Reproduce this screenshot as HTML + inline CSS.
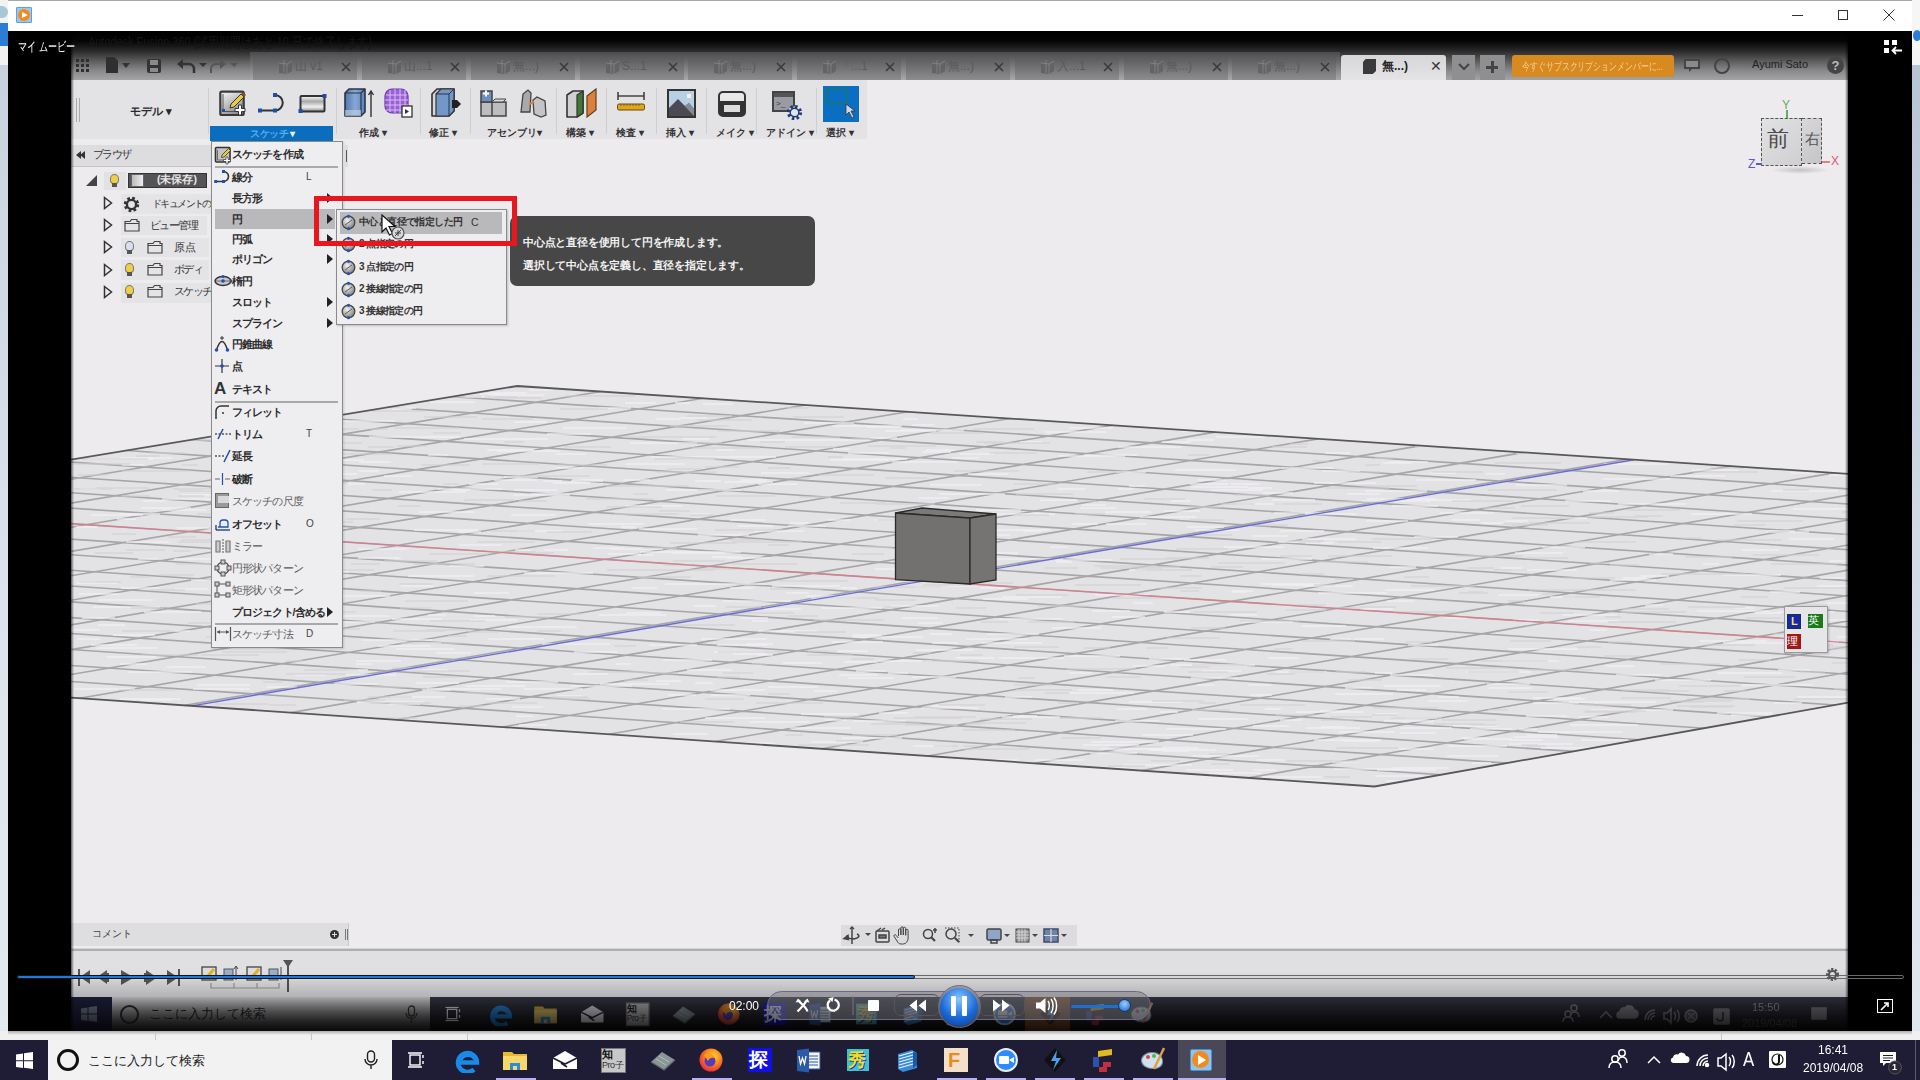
<!DOCTYPE html>
<html><head><meta charset="utf-8">
<style>
*{margin:0;padding:0;box-sizing:border-box}
html,body{width:1920px;height:1080px;overflow:hidden;background:#f0f0f0;font-family:"Liberation Sans",sans-serif}
.a{position:absolute}
</style></head>
<body>
<div class="a" style="left:0;top:0;width:8px;height:1040px;background:linear-gradient(#c8d3df 65px,#dbe3ec 600px,#e4e9ef)"></div>
<div class="a" style="left:0;top:0;width:8px;height:65px;background:#f2f2f2"></div>
<div class="a" style="left:0;top:23px;width:8px;height:23px;background:#2a7fd4"></div>
<div class="a" style="left:0;top:6px;width:8px;height:12px;background:#a8c8d8;border-radius:0 6px 6px 0"></div>
<div class="a" style="left:1912px;top:0;width:8px;height:1040px;background:linear-gradient(#b8c5d3 65px,#d8e0ea 700px,#e0e6ee)"></div>
<div class="a" style="left:1912px;top:0;width:8px;height:65px;background:#f6f6f6"></div>
<div class="a" style="left:1913px;top:30px;width:8px;height:11px;background:#2a7fd4;border-radius:50%"></div>
<div class="a" style="left:0;top:1031px;width:1920px;height:9px;background:#f0f0f0"></div>
<!-- player window title bar -->
<div class="a" style="left:8px;top:0;width:1904px;height:31px;background:#fff;border-top:1px solid #a8a8a8"></div>
<div class="a" style="left:16px;top:7px;width:16px;height:16px;background:#9cc8ee;border:1px solid #5aa0e0;border-radius:1px"></div>
<div class="a" style="left:18px;top:9px;width:12px;height:12px;background:#f5891e;border-radius:50%"></div>
<div class="a" style="left:22px;top:12px;width:0;height:0;border-left:6px solid #fff;border-top:3.5px solid transparent;border-bottom:3.5px solid transparent"></div>
<div class="a" style="left:1792px;top:15px;width:11px;height:1px;background:#333"></div>
<div class="a" style="left:1838px;top:10px;width:10px;height:10px;border:1px solid #333"></div>
<svg class="a" style="left:1883px;top:9px" width="12" height="12"><path d="M0.5 0.5L11.5 11.5M11.5 0.5L0.5 11.5" stroke="#333" stroke-width="1"/></svg>
<!-- video black -->
<div class="a" style="left:8px;top:31px;width:1904px;height:1000px;background:#000"></div>

<!-- FUSION -->
<div class="a" style="left:71px;top:31px;width:1777px;height:966px;background:#edebee"></div>
<!-- fusion title + tab bar gradient -->
<div class="a" style="left:71px;top:31px;width:1777px;height:49px;background:linear-gradient(#000 0px,#050505 10px,#2a2a2a 20px,#5c5c5c 30px,#8a8a8c 40px,#a4a3a6 49px)"></div>
<div class="a" style="left:88px;top:34px;font-size:14px;color:#161616;white-space:nowrap;transform:scaleX(0.78);transform-origin:0 0;line-height:16px">Autodesk Fusion 360 (試用期間はあと 10 日で終了します)</div>
<!-- left quick access icons -->
<div class="a" style="left:76px;top:59px;width:13px;height:13px;background:repeating-linear-gradient(90deg,#2f2f2f 0 3px,transparent 3px 5px),transparent;-webkit-mask:repeating-linear-gradient(#000 0 3px,transparent 3px 5px)"></div>
<div class="a" style="left:106px;top:57px;width:12px;height:16px;background:#2f2f2f;clip-path:polygon(0 0,70% 0,100% 25%,100% 100%,0 100%)"></div>
<div class="a" style="left:122px;top:63px;width:0;height:0;border-top:5px solid #333;border-left:4px solid transparent;border-right:4px solid transparent"></div>
<div class="a" style="left:147px;top:59px;width:14px;height:14px;background:#333;border-radius:2px"></div>
<div class="a" style="left:150px;top:60px;width:8px;height:5px;background:#8a8a8a"></div>
<div class="a" style="left:150px;top:68px;width:8px;height:4px;background:#8a8a8a"></div>
<svg class="a" style="left:176px;top:57px" width="64" height="18"><path d="M4 7h9a5 5 0 0 1 5 5v4" stroke="#333" stroke-width="2.5" fill="none"/><path d="M1 7l6-5v10z" fill="#333"/><path d="M23 6l4 4 4-4z" fill="#333"/><path d="M45 7h-5a5 5 0 0 0-5 5v4" stroke="#555" stroke-width="2" fill="none"/><path d="M50 7l-6-5v10z" fill="#555"/><path d="M54 6l4 4 4-4z" fill="#555"/></svg>
<!-- tabs -->
<div class="a" style="left:250px;top:52px;width:1090px;height:28px;background:linear-gradient(#4a4a4c,#a9a8ab)"></div><div class="a" style="left:253px;top:55px;width:104px;height:25px;background:linear-gradient(#555557,#8d8c8f);"></div><svg class="a" style="left:277px;top:59px" width="16" height="16"><path d="M2 4l5-3 8 1v10l-5 3-8-1z" fill="#636265"/><path d="M7 1v13M2 4l8 1v10M10 5l5-3" stroke="#88878a" stroke-width="0.8" fill="none"/></svg><div class="a" style="left:295px;top:59px;font-size:12px;color:#5a595c;white-space:nowrap;line-height:15px">山 v1</div><svg class="a" style="left:341px;top:62px" width="10" height="10"><path d="M1 1l8 8M9 1l-8 8" stroke="#3a3a3a" stroke-width="1.6"/></svg><div class="a" style="left:362px;top:55px;width:104px;height:25px;background:linear-gradient(#555557,#8d8c8f);"></div><svg class="a" style="left:386px;top:59px" width="16" height="16"><path d="M2 4l5-3 8 1v10l-5 3-8-1z" fill="#636265"/><path d="M7 1v13M2 4l8 1v10M10 5l5-3" stroke="#88878a" stroke-width="0.8" fill="none"/></svg><div class="a" style="left:404px;top:59px;font-size:12px;color:#5a595c;white-space:nowrap;line-height:15px">山...1</div><svg class="a" style="left:450px;top:62px" width="10" height="10"><path d="M1 1l8 8M9 1l-8 8" stroke="#3a3a3a" stroke-width="1.6"/></svg><div class="a" style="left:471px;top:55px;width:104px;height:25px;background:linear-gradient(#555557,#8d8c8f);"></div><svg class="a" style="left:495px;top:59px" width="16" height="16"><path d="M2 4l5-3 8 1v10l-5 3-8-1z" fill="#636265"/><path d="M7 1v13M2 4l8 1v10M10 5l5-3" stroke="#88878a" stroke-width="0.8" fill="none"/></svg><div class="a" style="left:513px;top:59px;font-size:12px;color:#5a595c;white-space:nowrap;line-height:15px">無...)</div><svg class="a" style="left:559px;top:62px" width="10" height="10"><path d="M1 1l8 8M9 1l-8 8" stroke="#3a3a3a" stroke-width="1.6"/></svg><div class="a" style="left:580px;top:55px;width:104px;height:25px;background:linear-gradient(#555557,#8d8c8f);"></div><svg class="a" style="left:604px;top:59px" width="16" height="16"><path d="M2 4l5-3 8 1v10l-5 3-8-1z" fill="#636265"/><path d="M7 1v13M2 4l8 1v10M10 5l5-3" stroke="#88878a" stroke-width="0.8" fill="none"/></svg><div class="a" style="left:622px;top:59px;font-size:12px;color:#5a595c;white-space:nowrap;line-height:15px">S...1</div><svg class="a" style="left:668px;top:62px" width="10" height="10"><path d="M1 1l8 8M9 1l-8 8" stroke="#3a3a3a" stroke-width="1.6"/></svg><div class="a" style="left:688px;top:55px;width:104px;height:25px;background:linear-gradient(#555557,#8d8c8f);"></div><svg class="a" style="left:712px;top:59px" width="16" height="16"><path d="M2 4l5-3 8 1v10l-5 3-8-1z" fill="#636265"/><path d="M7 1v13M2 4l8 1v10M10 5l5-3" stroke="#88878a" stroke-width="0.8" fill="none"/></svg><div class="a" style="left:730px;top:59px;font-size:12px;color:#5a595c;white-space:nowrap;line-height:15px">無...)</div><svg class="a" style="left:776px;top:62px" width="10" height="10"><path d="M1 1l8 8M9 1l-8 8" stroke="#3a3a3a" stroke-width="1.6"/></svg><div class="a" style="left:797px;top:55px;width:104px;height:25px;background:linear-gradient(#555557,#8d8c8f);"></div><svg class="a" style="left:821px;top:59px" width="16" height="16"><path d="M2 4l5-3 8 1v10l-5 3-8-1z" fill="#636265"/><path d="M7 1v13M2 4l8 1v10M10 5l5-3" stroke="#88878a" stroke-width="0.8" fill="none"/></svg><div class="a" style="left:839px;top:59px;font-size:12px;color:#5a595c;white-space:nowrap;line-height:15px">「...1</div><svg class="a" style="left:885px;top:62px" width="10" height="10"><path d="M1 1l8 8M9 1l-8 8" stroke="#3a3a3a" stroke-width="1.6"/></svg><div class="a" style="left:906px;top:55px;width:104px;height:25px;background:linear-gradient(#555557,#8d8c8f);"></div><svg class="a" style="left:930px;top:59px" width="16" height="16"><path d="M2 4l5-3 8 1v10l-5 3-8-1z" fill="#636265"/><path d="M7 1v13M2 4l8 1v10M10 5l5-3" stroke="#88878a" stroke-width="0.8" fill="none"/></svg><div class="a" style="left:948px;top:59px;font-size:12px;color:#5a595c;white-space:nowrap;line-height:15px">無...)</div><svg class="a" style="left:994px;top:62px" width="10" height="10"><path d="M1 1l8 8M9 1l-8 8" stroke="#3a3a3a" stroke-width="1.6"/></svg><div class="a" style="left:1015px;top:55px;width:104px;height:25px;background:linear-gradient(#555557,#8d8c8f);"></div><svg class="a" style="left:1039px;top:59px" width="16" height="16"><path d="M2 4l5-3 8 1v10l-5 3-8-1z" fill="#636265"/><path d="M7 1v13M2 4l8 1v10M10 5l5-3" stroke="#88878a" stroke-width="0.8" fill="none"/></svg><div class="a" style="left:1057px;top:59px;font-size:12px;color:#5a595c;white-space:nowrap;line-height:15px">入...1</div><svg class="a" style="left:1103px;top:62px" width="10" height="10"><path d="M1 1l8 8M9 1l-8 8" stroke="#3a3a3a" stroke-width="1.6"/></svg><div class="a" style="left:1124px;top:55px;width:104px;height:25px;background:linear-gradient(#555557,#8d8c8f);"></div><svg class="a" style="left:1148px;top:59px" width="16" height="16"><path d="M2 4l5-3 8 1v10l-5 3-8-1z" fill="#636265"/><path d="M7 1v13M2 4l8 1v10M10 5l5-3" stroke="#88878a" stroke-width="0.8" fill="none"/></svg><div class="a" style="left:1166px;top:59px;font-size:12px;color:#5a595c;white-space:nowrap;line-height:15px">無...)</div><svg class="a" style="left:1212px;top:62px" width="10" height="10"><path d="M1 1l8 8M9 1l-8 8" stroke="#3a3a3a" stroke-width="1.6"/></svg><div class="a" style="left:1232px;top:55px;width:104px;height:25px;background:linear-gradient(#555557,#8d8c8f);"></div><svg class="a" style="left:1256px;top:59px" width="16" height="16"><path d="M2 4l5-3 8 1v10l-5 3-8-1z" fill="#636265"/><path d="M7 1v13M2 4l8 1v10M10 5l5-3" stroke="#88878a" stroke-width="0.8" fill="none"/></svg><div class="a" style="left:1274px;top:59px;font-size:12px;color:#5a595c;white-space:nowrap;line-height:15px">無...)</div><svg class="a" style="left:1320px;top:62px" width="10" height="10"><path d="M1 1l8 8M9 1l-8 8" stroke="#3a3a3a" stroke-width="1.6"/></svg>
<div class="a" style="left:1341px;top:55px;width:105px;height:25px;background:linear-gradient(#d6d5d8,#e4e3e6);border-radius:3px 3px 0 0"></div>
<div class="a" style="left:1363px;top:59px;width:13px;height:15px;background:#3a3a3a;clip-path:polygon(20% 0,100% 0,100% 80%,75% 100%,0 100%,0 20%)"></div>
<div class="a" style="left:1382px;top:58px;font-size:12px;color:#222;font-weight:bold">無...)</div>
<div class="a" style="left:1430px;top:58px;font-size:14px;color:#333">✕</div>
<div class="a" style="left:1452px;top:55px;width:23px;height:25px;background:#8f8e91"></div>
<svg class="a" style="left:1458px;top:63px" width="12" height="9"><path d="M1 1l5 5 5-5" stroke="#444" stroke-width="2" fill="none"/></svg>
<div class="a" style="left:1480px;top:55px;width:25px;height:25px;background:#8f8e91"></div>
<div class="a" style="left:1486px;top:66px;width:12px;height:2.5px;background:#444"></div>
<div class="a" style="left:1491px;top:61px;width:2.5px;height:12px;background:#444"></div>
<div class="a" style="left:1512px;top:55px;width:162px;height:22px;background:#d88a1e;border-radius:3px"></div>
<div class="a" style="left:1522px;top:59px;font-size:10.5px;color:#f3cf98;white-space:nowrap;transform:scaleX(0.72);transform-origin:0 0;line-height:14px">今すぐサブスクリプションメンバーに...</div>
<svg class="a" style="left:1683px;top:58px" width="18" height="16"><path d="M1 1h16v10H9l-3 3v-3H1z" fill="#444"/><path d="M3 3h12v6H3z" fill="#8a898c"/></svg>
<div class="a" style="left:1714px;top:58px;width:16px;height:16px;border:2px solid #444;border-radius:50%"></div>
<div class="a" style="left:1752px;top:58px;font-size:11px;color:#222;white-space:nowrap">Ayumi Sato</div>
<div class="a" style="left:1827px;top:57px;width:17px;height:17px;background:#444;border-radius:50%;color:#bbb;font-size:13px;font-weight:bold;text-align:center;line-height:17px">?</div>

<!-- toolbar panel -->
<div class="a" style="left:71px;top:80px;width:796px;height:59px;background:#e3e2e5"></div>
<div class="a" style="left:76px;top:98px;width:1px;height:24px;background:#a9a9ab"></div>
<div class="a" style="left:79px;top:98px;width:1px;height:24px;background:#a9a9ab"></div>
<div class="a" style="left:130px;top:104px;font-size:11px;font-weight:bold;color:#2a2a2a;white-space:nowrap">モデル ▾</div>
<div class="a" style="left:208px;top:88px;width:1px;height:46px;background:#cfcfd1"></div>
<!-- sketch icons -->
<svg class="a" style="left:216px;top:88px" width="32" height="32" viewBox="216 88 32 32">
<defs><linearGradient id="skg" x1="0" y1="0" x2="0.6" y2="1"><stop offset="0" stop-color="#fafafa"/><stop offset="1" stop-color="#8e8e90"/></linearGradient>
<linearGradient id="rcg" x1="0" y1="0" x2="0" y2="1"><stop offset="0" stop-color="#fdfdfd"/><stop offset="0.35" stop-color="#a9a9ab"/><stop offset="0.7" stop-color="#f0f0f0"/><stop offset="1" stop-color="#8a8a8c"/></linearGradient></defs>
<rect x="220.3" y="91.6" width="23.4" height="23.4" rx="1.5" fill="url(#skg)" stroke="#3a3a3a" stroke-width="2.2"/>
<path d="M223 94v17.5h13" stroke="#555" stroke-width="1" fill="none"/>
<rect x="222" y="109" width="3" height="3" fill="#1c4fa8"/>
<path d="M231 104l10-10 3 3-10 10-4 1z" fill="#e8cc40" stroke="#333" stroke-width="1"/>
<path d="M241 94l2-2 3 3-2 2z" fill="#7a5030"/>
<path d="M238.5 105h3v3.5h3.5v3h-3.5v3.5h-3v-3.5H235v-3h3.5z" fill="#fff" stroke="#333" stroke-width="1"/>
</svg>
<svg class="a" style="left:255px;top:90px" width="36" height="26" viewBox="255 90 36 26"><path d="M260 110.5H275M275 95a7.75 7.75 0 0 1 0 15.5" stroke="#333" stroke-width="2" fill="none"/><rect x="258" y="108.5" width="4" height="4" fill="#1c4fa8"/><rect x="273" y="108.5" width="4" height="4" fill="#1c4fa8"/><rect x="273" y="93" width="4" height="4" fill="#1c4fa8"/></svg>
<svg class="a" style="left:297px;top:93px" width="32" height="22" viewBox="297 93 32 22"><rect x="300.5" y="96" width="24" height="15.5" rx="1" fill="url(#rcg)" stroke="#333" stroke-width="2"/><rect x="322.5" y="94" width="4" height="4" fill="#1c4fa8"/><rect x="298.5" y="109" width="4" height="4" fill="#1c4fa8"/></svg>
<div class="a" style="left:210px;top:126px;width:123px;height:15px;background:#0a6dbd"></div>
<div class="a" style="left:250px;top:127px;font-size:9.5px;font-weight:bold;color:#58b0e6;white-space:nowrap;line-height:13px;letter-spacing:-0.5px">スケッチ <span style="color:#e8f4ff">▾</span></div>
<div class="a" style="left:336px;top:88px;width:1px;height:46px;background:#cfcfd1"></div>
<!-- create -->
<svg class="a" style="left:340px;top:86px" width="36" height="34" viewBox="340 86 36 34">
<defs><linearGradient id="exg" x1="0" y1="0" x2="1" y2="0"><stop offset="0" stop-color="#4f78ad"/><stop offset="0.5" stop-color="#86a8d4"/><stop offset="1" stop-color="#5c84b8"/></linearGradient></defs>
<path d="M345 93l4-4h16v23l-4 4h-16z" fill="url(#exg)" stroke="#2a3444" stroke-width="1.6" stroke-linejoin="round"/>
<path d="M345 93h16v23M361 93l4-4" stroke="#2a3444" stroke-width="1.2" fill="none"/>
<path d="M345 110h16v6h-16z" fill="#c8d4e4" opacity="0.6"/>
<path d="M371 117V92M368.5 95l2.5-4 2.5 4" stroke="#333" stroke-width="1.4" fill="none"/>
</svg>
<svg class="a" style="left:381px;top:86px" width="34" height="34" viewBox="381 86 34 34">
<rect x="385" y="89" width="23" height="24" rx="7" fill="#9a60d6" stroke="#6a3ca8" stroke-width="1.2"/>
<path d="M390 90v22M395 89v24M400 89v24M405 90v22M386 95h21M385 100h23M385 105h23M386 110h21" stroke="#d8bff5" stroke-width="1"/>
<rect x="402" y="106" width="10" height="11" fill="#fff" stroke="#333" stroke-width="1.3"/><path d="M405 109l4 2.5-4 2.5z" fill="#333"/>
</svg>
<div class="a" style="left:359px;top:126px;font-size:9.5px;font-weight:bold;color:#333;line-height:14px;white-space:nowrap">作成 ▾</div>
<div class="a" style="left:420px;top:88px;width:1px;height:46px;background:#cfcfd1"></div>
<!-- modify -->
<svg class="a" style="left:427px;top:86px" width="36" height="34" viewBox="427 86 36 34">
<path d="M432 94l5-5h17v22l-5 5h-17z" fill="#d6d6d8" stroke="#333" stroke-width="1.6" stroke-linejoin="round"/>
<path d="M436 94l5-5h13v22l-5 5h-13z" fill="#7398c8" stroke="#333" stroke-width="1.2"/>
<path d="M436 94h13v22M449 94l5-5" stroke="#2a3444" stroke-width="1" fill="none"/>
<path d="M452 100h5l4 4-4 4h-5z" fill="#222"/>
</svg>
<div class="a" style="left:429px;top:126px;font-size:9.5px;font-weight:bold;color:#333;line-height:14px;white-space:nowrap">修正 ▾</div>
<div class="a" style="left:470px;top:88px;width:1px;height:46px;background:#cfcfd1"></div>
<!-- assembly -->
<svg class="a" style="left:477px;top:86px" width="76" height="34" viewBox="477 86 76 34">
<path d="M481 102h11v14h-11zM492 102h14v14h-14z" fill="#bdbdbf" stroke="#444" stroke-width="1.5"/>
<path d="M492 102l3-3h11l-3 3z" fill="#d8d8da" stroke="#444" stroke-width="1"/>
<path d="M481 91h11v11h-11z" fill="#6d8fbd" stroke="#444" stroke-width="1.5"/>
<path d="M483 93.5h6M486 90.5v6" stroke="#fff" stroke-width="2"/>
<path d="M521 112l2-18 5-4 3 3-1 19z" fill="#a9a9ab" stroke="#444" stroke-width="1.3"/>
<path d="M533 100l4-3 8 4 1 14-5 2-7-3z" fill="#c4c4c6" stroke="#444" stroke-width="1.3"/>
<path d="M529 104l5-2" stroke="#e08030" stroke-width="2"/>
</svg>
<div class="a" style="left:487px;top:126px;font-size:9.5px;font-weight:bold;color:#333;line-height:14px;white-space:nowrap">アセンブリ▾</div>
<div class="a" style="left:556px;top:88px;width:1px;height:46px;background:#cfcfd1"></div>
<!-- construct -->
<svg class="a" style="left:564px;top:86px" width="38" height="34" viewBox="564 86 38 34">
<path d="M567 95l6-4h10v22l-6 4h-10z" fill="#d0d0d2" stroke="#333" stroke-width="1.6" stroke-linejoin="round"/>
<path d="M577 95l6-4v22l-6 4z" fill="#3f7a34" stroke="#333" stroke-width="1.2"/>
<path d="M587 96l9-7v21l-9 7z" fill="#d8823e" stroke="#6a3c18" stroke-width="1.2"/>
</svg>
<div class="a" style="left:566px;top:126px;font-size:9.5px;font-weight:bold;color:#333;line-height:14px;white-space:nowrap">構築 ▾</div>
<div class="a" style="left:606px;top:88px;width:1px;height:46px;background:#cfcfd1"></div>
<!-- inspect -->
<svg class="a" style="left:614px;top:88px" width="34" height="26" viewBox="614 88 34 26">
<path d="M618 96h26M618 92v8M644 92v8" stroke="#444" stroke-width="1.6"/>
<rect x="617.5" y="104" width="27" height="6" rx="1.5" fill="#dca61e" stroke="#6a4a08" stroke-width="1"/>
<path d="M621 104v2M624 104v2M627 104v2M630 104v2M633 104v2M636 104v2M639 104v2" stroke="#6a4a08" stroke-width="0.7"/>
</svg>
<div class="a" style="left:616px;top:126px;font-size:9.5px;font-weight:bold;color:#333;line-height:14px;white-space:nowrap">検査 ▾</div>
<div class="a" style="left:656px;top:88px;width:1px;height:46px;background:#cfcfd1"></div>
<!-- insert -->
<svg class="a" style="left:667px;top:89px" width="29" height="29"><rect x="1" y="1" width="27" height="27" fill="#b9cfe6" stroke="#333" stroke-width="2"/><path d="M2 27V19l9-9 7 7 4-3 5 6v7z" fill="#4a4a55"/><path d="M11 10l7 7 4-3 5 6v7" fill="#8a8a95"/><rect x="20" y="5" width="4" height="4" fill="#f4f4d0"/></svg>
<div class="a" style="left:666px;top:126px;font-size:9.5px;font-weight:bold;color:#333;line-height:14px;white-space:nowrap">挿入 ▾</div>
<div class="a" style="left:706px;top:88px;width:1px;height:46px;background:#cfcfd1"></div>
<!-- make -->
<div class="a" style="left:718px;top:91px;width:28px;height:26px;border:2px solid #333;border-radius:5px;background:linear-gradient(#e8e8e8 0 35%,#333 35%)"></div>
<div class="a" style="left:724px;top:105px;width:16px;height:7px;background:#ddd"></div>
<div class="a" style="left:716px;top:126px;font-size:9.5px;font-weight:bold;color:#333;line-height:14px;white-space:nowrap">メイク ▾</div>
<div class="a" style="left:756px;top:88px;width:1px;height:46px;background:#cfcfd1"></div>
<!-- addins -->
<div class="a" style="left:772px;top:91px;width:23px;height:21px;border:2px solid #444;background:linear-gradient(#555 0 25%,#9a9aa4 25%)"></div>
<svg class="a" style="left:786px;top:104px" width="17" height="17"><circle cx="8.5" cy="8.5" r="6" fill="#e3e2e5" stroke="#1d3a78" stroke-width="3.2" stroke-dasharray="2.4 2.3"/><circle cx="8.5" cy="8.5" r="4.3" fill="#e3e2e5" stroke="#1d3a78" stroke-width="1.4"/></svg><div class="a" style="left:776px;top:99px;font-size:8px;color:#333;line-height:9px">&gt;_</div>
<div class="a" style="left:766px;top:126px;font-size:9.5px;font-weight:bold;color:#333;line-height:14px;white-space:nowrap">アドイン ▾</div>
<div class="a" style="left:816px;top:88px;width:1px;height:46px;background:#cfcfd1"></div>
<!-- select -->
<div class="a" style="left:823px;top:86px;width:36px;height:36px;background:#0a6fc2"></div>
<div class="a" style="left:827px;top:89px;width:20px;height:14px;border:1.5px solid #1d7a40"></div>
<svg class="a" style="left:845px;top:103px" width="12" height="16"><path d="M1 1v11l3-3 3 6 2-1-3-6h4z" fill="#cfd8e6" stroke="#333" stroke-width="0.8"/></svg>
<div class="a" style="left:826px;top:126px;font-size:9.5px;font-weight:bold;color:#333;line-height:14px;white-space:nowrap">選択 ▾</div>

<!-- browser header -->
<div class="a" style="left:71px;top:145px;width:140px;height:22px;background:#dddcdf;border-bottom:1px solid #c5c4c7"></div>
<div class="a" style="left:76px;top:151px;width:0;height:0;border-right:5px solid #333;border-top:4px solid transparent;border-bottom:4px solid transparent"></div>
<div class="a" style="left:80px;top:151px;width:0;height:0;border-right:5px solid #333;border-top:4px solid transparent;border-bottom:4px solid transparent"></div>
<div class="a" style="left:93px;top:148px;font-size:10.5px;color:#333;white-space:nowrap;letter-spacing:-1.6px">ブラウザ</div>
<!-- tree -->
<div class="a" style="left:86px;top:175px;width:11px;height:11px;background:#444;clip-path:polygon(100% 0,100% 100%,0 100%)"></div>
<div class="a" style="left:104px;top:172px;width:22px;height:18px;background:#e2e1e4"></div>
<div class="a" style="left:110px;top:174px;width:9px;height:10px;background:#f0d040;border:1px solid #777;border-radius:50% 50% 40% 40%"></div>
<div class="a" style="left:112px;top:183px;width:5px;height:4px;background:#555"></div>
<div class="a" style="left:128px;top:173px;width:79px;height:15px;background:#545456;border:1px solid #333"></div>
<div class="a" style="left:131px;top:174px;width:13px;height:13px;background:linear-gradient(90deg,#bbb,#eee);border:1px solid #666"></div>
<div class="a" style="left:157px;top:173px;font-size:10.5px;font-weight:bold;color:#e8e8e8;white-space:nowrap">(未保存)</div>

<div class="a" style="left:121px;top:194px;width:90px;height:20px;background:#e4e3e6"></div>
<svg class="a" style="left:103px;top:196px" width="10" height="14"><path d="M1.5 1.5L8.5 7 1.5 12.5z" fill="none" stroke="#333" stroke-width="1.5"/></svg>
<svg class="a" style="left:123px;top:196px" width="17" height="17"><circle cx="8.5" cy="8.5" r="6.2" fill="none" stroke="#333" stroke-width="3" stroke-dasharray="2.6 2.26"/><circle cx="8.5" cy="8.5" r="4.6" fill="none" stroke="#333" stroke-width="2.4"/></svg>
<div class="a" style="left:152px;top:197px;font-size:10px;color:#333;white-space:nowrap;letter-spacing:-1.6px">ドキュメントの設</div>

<div class="a" style="left:121px;top:216px;width:86px;height:19px;background:#e4e3e6"></div>
<svg class="a" style="left:103px;top:218px" width="10" height="14"><path d="M1.5 1.5L8.5 7 1.5 12.5z" fill="none" stroke="#333" stroke-width="1.5"/></svg>
<svg class="a" style="left:124px;top:218px" width="16" height="14"><path d="M1 3.5h5l1.5-2H13v2h2v9.5H1z" fill="none" stroke="#444" stroke-width="1.2"/><path d="M1 5.5h14" stroke="#444" stroke-width="1"/></svg>
<div class="a" style="left:150px;top:219px;font-size:10.5px;color:#333;white-space:nowrap;letter-spacing:-1.6px">ビュー管理</div>

<div class="a" style="left:121px;top:238px;width:88px;height:19px;background:#e4e3e6"></div>
<svg class="a" style="left:103px;top:240px" width="10" height="14"><path d="M1.5 1.5L8.5 7 1.5 12.5z" fill="none" stroke="#333" stroke-width="1.5"/></svg>
<div class="a" style="left:125px;top:241px;width:9px;height:10px;background:#d8e0ee;border:1px solid #777;border-radius:50% 50% 40% 40%"></div>
<div class="a" style="left:127px;top:250px;width:5px;height:4px;background:#555"></div>
<svg class="a" style="left:147px;top:240px" width="16" height="14"><path d="M1 3.5h5l1.5-2H13v2h2v9.5H1z" fill="none" stroke="#444" stroke-width="1.2"/><path d="M1 5.5h14" stroke="#444" stroke-width="1"/></svg>
<div class="a" style="left:174px;top:241px;font-size:10.5px;color:#333;white-space:nowrap">原点</div>

<div class="a" style="left:121px;top:260px;width:88px;height:20px;background:#e4e3e6"></div>
<svg class="a" style="left:103px;top:263px" width="10" height="14"><path d="M1.5 1.5L8.5 7 1.5 12.5z" fill="none" stroke="#333" stroke-width="1.5"/></svg>
<div class="a" style="left:125px;top:263px;width:9px;height:10px;background:#f0d040;border:1px solid #777;border-radius:50% 50% 40% 40%"></div>
<div class="a" style="left:127px;top:272px;width:5px;height:4px;background:#555"></div>
<svg class="a" style="left:147px;top:262px" width="16" height="14"><path d="M1 3.5h5l1.5-2H13v2h2v9.5H1z" fill="none" stroke="#444" stroke-width="1.2"/><path d="M1 5.5h14" stroke="#444" stroke-width="1"/></svg>
<div class="a" style="left:174px;top:263px;font-size:10.5px;color:#333;white-space:nowrap;letter-spacing:-1.6px">ボディ</div>

<div class="a" style="left:121px;top:283px;width:90px;height:20px;background:#e4e3e6"></div>
<svg class="a" style="left:103px;top:285px" width="10" height="14"><path d="M1.5 1.5L8.5 7 1.5 12.5z" fill="none" stroke="#333" stroke-width="1.5"/></svg>
<div class="a" style="left:125px;top:285px;width:9px;height:10px;background:#f0d040;border:1px solid #777;border-radius:50% 50% 40% 40%"></div>
<div class="a" style="left:127px;top:294px;width:5px;height:4px;background:#555"></div>
<svg class="a" style="left:147px;top:284px" width="16" height="14"><path d="M1 3.5h5l1.5-2H13v2h2v9.5H1z" fill="none" stroke="#444" stroke-width="1.2"/><path d="M1 5.5h14" stroke="#444" stroke-width="1"/></svg>
<div class="a" style="left:174px;top:285px;font-size:10.5px;color:#333;white-space:nowrap;letter-spacing:-1.6px">スケッチ</div>

<svg class="a" style="left:71px;top:31px" width="1777" height="966" viewBox="0 0 1777 966">
<polygon points="446.3,355.0 2719.0,505.0 1303.5,755.5 -1021.0,597.0" fill="#e3e2e5"/>
<path d="M530.2,360.5L-935.2,602.9M632.3,367.3L-830.9,610.0M734.4,374.0L-726.5,617.1M836.7,380.8L-621.9,624.2M939.1,387.5L-517.2,631.4M1041.6,394.3L-412.4,638.5M1144.3,401.1L-307.4,645.7M1247.1,407.9L-202.2,652.8M1350.0,414.6L-97.0,660.0M1453.1,421.4L8.5,667.2M1556.3,428.3L114.0,674.4M1659.6,435.1L219.7,681.6M1763.1,441.9L325.6,688.8M1866.7,448.7L431.5,696.0M1970.5,455.6L537.7,703.3M2074.4,462.5L643.9,710.5M2178.4,469.3L750.4,717.8M2282.5,476.2L856.9,725.0M2386.8,483.1L963.6,732.3M2491.3,490.0L1070.5,739.6M2595.8,496.9L1177.5,746.9M381.6,365.7L2656.6,516.0M316.7,376.4L2594.0,527.1M251.6,387.1L2531.2,538.2M186.3,397.9L2468.3,549.4M120.9,408.7L2405.2,560.5M55.2,419.5L2341.9,571.7M-10.6,430.4L2278.4,583.0M-76.6,441.2L2214.7,594.2M-142.8,452.2L2150.8,605.5M-209.2,463.1L2086.8,616.9M-275.8,474.1L2022.6,628.2M-342.6,485.1L1958.1,639.6M-409.5,496.2L1893.5,651.1M-476.7,507.2L1828.7,662.5M-544.1,518.3L1763.8,674.0M-611.6,529.5L1698.6,685.6M-679.3,540.7L1633.2,697.2M-747.3,551.9L1567.7,708.8M-815.4,563.1L1501.9,720.4M-883.7,574.4L1436.0,732.1M-952.3,585.7L1369.8,743.8" stroke="#a6a5a8" stroke-width="1.6" fill="none"/>
<defs><clipPath id="pl"><polygon points="446.3,355.0 2719.0,505.0 1303.5,755.5 -1021.0,597.0"/></clipPath></defs>
<g clip-path="url(#pl)"><path d="M575 412h51M952 500h18M67 528h19M754 689h22M1115 739h47M1735 369h62M321 588h50M973 376h18M1296 468h69M743 660h23M1150 757h60M686 624h16M1456 704h30M638 713h68M313 445h28M1047 458h15M916 603h52M111 378h26M604 372h15M1091 411h29M828 548h20M609 459h61M41 740h44M1534 635h29M403 562h35M1697 500h27M591 678h68M713 738h55M623 575h22M771 707h60M747 726h43M930 358h39M7 678h24M1289 578h33M442 464h57M998 662h65M1243 709h67M994 737h61M216 531h19M274 644h51M287 527h43M348 481h55M985 531h16M1401 748h21M70 669h30M750 724h60M159 374h53M476 403h44M194 416h18M554 475h57M889 423h34M337 545h66M719 492h18M126 654h29M501 449h31M550 496h15M843 556h26M9 458h20M74 359h32M1272 710h36M1304 683h23M409 363h22M1113 629h42M1418 657h43M1172 377h56M132 459h55M1315 750h42M1142 382h23M1321 475h46M1201 469h43M829 399h64M1738 734h16M1457 747h40M252 565h67M411 718h42M6 552h40M3 658h61M1646 642h65M641 526h30M443 459h43M1121 725h67M1279 370h55M1337 614h31M1647 402h41M529 653h69M1166 473h46M800 407h26M608 387h28M1012 714h56M735 565h36M110 464h68M895 608h62M482 452h37M1695 698h63M57 641h64M1467 701h68M413 727h51M690 442h48M1570 545h28M1707 639h32M885 627h38M1186 729h27M601 522h53M1416 653h43M1723 478h60M881 427h27M1182 739h23M378 749h23M1302 759h66M330 734h56M1181 505h36M301 351h30M1698 401h68M634 687h60M343 499h64M730 683h57M62 376h66M1328 718h34M1629 610h67M687 453h39M1462 667h48M568 498h58M351 659h29M1570 755h30M171 554h54M1329 697h52M1494 470h46M1312 432h29M272 713h47M704 757h43M1437 618h70M72 470h22M1729 589h66M387 501h23M453 596h51M20 484h52M555 433h59M555 582h35M1536 759h35M659 557h23M926 729h21M1430 746h26M1676 750h42M1465 416h58M719 697h61M388 514h43M73 581h57M757 620h40M42 604h42M1357 670h40M841 394h22M163 531h43M909 372h43M874 742h65M1401 732h19M1344 415h64M370 458h43M204 568h50M186 757h50M640 664h39M1321 370h60M556 351h17M235 443h51M5 496h21M399 589h47M1548 671h37M20 614h46M442 720h17M22 576h67M1445 422h32M11 696h56M1318 536h27M1235 697h54M984 529h58M471 613h68M1564 356h29M1322 737h56M777 647h46M613 408h17M1625 737h21M1127 688h50M177 390h57M567 524h16M502 643h35M616 639h45M1532 387h60M463 737h31M1116 496h37M1582 385h64M366 458h65M674 712h28M1177 654h24M1374 587h22M1573 448h26M1250 696h24M440 484h44M181 745h21M1748 676h55M349 612h21M1232 555h50M1119 453h38M325 618h58M870 750h17M286 671h67M910 612h61M632 373h30M1455 685h41M974 401h61M1512 460h36M500 450h32M761 611h51M1166 453h21M415 668h34M986 458h28M876 374h41M1182 695h36M587 753h43M602 703h35M934 666h27M751 577h60M1471 516h43M1574 574h18M1210 437h52M1355 392h25M1376 725h51M1462 672h46M537 523h33M1632 533h16M1052 734h69M733 392h50M229 357h55M1268 701h55M451 745h54M26 617h60M646 614h50M1737 691h48M1069 717h59M1442 706h46M356 658h66M1078 628h41M453 658h59M156 681h57M1030 718h64M847 592h25M715 562h23M1399 414h48M1539 549h46M1455 745h29M357 424h20M1617 376h48M1138 742h52M394 366h29M1604 721h61M187 483h29M855 419h28M1204 355h54M1540 714h23M804 489h60M1116 409h27M473 519h24M1492 487h24M101 717h52M848 467h29M173 469h64M1291 470h69M1434 490h23M1479 566h25M1621 439h46M320 666h54M141 386h48M1442 589h26M1302 517h55M876 356h65M8 563h40M109 708h67M912 568h45M1719 442h25M445 685h17M1024 564h54M1545 644h17M877 555h30M262 585h56M1468 734h36M1381 489h28M1448 698h18M1702 733h29M1124 499h44M770 557h16M1438 713h64M1140 459h52M964 729h49M925 528h67M1699 561h30M949 411h22M522 517h31M819 575h49M552 449h27M681 590h16M1532 448h46M282 377h63M1095 698h60M1313 655h57M1395 641h65M885 745h46M1393 708h48M804 538h55M694 578h36M1399 698h42M1033 386h66M1499 694h68M758 723h16M957 759h43M624 739h52M1020 711h68M782 606h70M942 685h24M1739 689h43M1578 523h24M909 557h25M545 633h15M1497 590h52M944 759h47M216 414h57M1089 681h18M1369 482h54M1035 493h40M781 604h29M881 739h28M861 675h28M637 426h68M998 397h44M624 450h26M421 364h52M277 639h20M897 443h40M654 451h48M1550 400h43M1009 477h36M194 580h35M528 377h32M224 644h31M1243 452h62M1304 642h17M288 431h32M70 477h50M1492 584h54M773 631h34M1483 668h31M1518 599h18M1332 385h53M1328 690h30M1313 690h50M96 636h39M1649 402h57M1249 680h29M1723 611h45M106 497h38M423 449h43M203 469h35M796 396h33M645 419h19M1742 581h21M772 428h45M1160 453h29M49 668h61M580 426h60M879 555h24M1033 383h53M788 748h20M781 428h55M1494 701h58M503 621h43M1606 417h31M1001 493h26M528 584h67M49 427h52M740 567h46M203 424h64M200 703h29M403 585h21M1046 383h37M181 690h37M1706 581h58M1379 374h28M27 594h27M1209 689h22M1310 739h55M201 729h52M677 409h63M1225 681h67M1207 511h41M1047 368h24M831 587h36M11 587h33M816 754h17M1192 462h30M1314 559h50M979 516h18M574 755h41M433 446h34M13 707h40M1011 474h24M120 549h64M458 359h24M1252 440h37M1071 704h51M1304 745h48M1438 709h34M1153 516h52M594 553h48M585 388h24M1363 387h60M1069 486h56M1264 663h58M1373 751h40M930 736h22M845 619h58M1758 444h57M50 405h18M987 425h67M288 362h58M1746 555h50M398 453h29M278 704h63M1335 687h31M173 419h53M1225 366h43M562 710h22M263 653h43M628 553h66M485 423h30M1553 644h37M745 749h36M729 409h70M670 449h26M1498 671h65M1234 483h51M417 608h56M1203 482h50M841 646h44M393 408h66M931 566h60M1470 717h63M678 691h60M273 453h21M1427 564h40M703 759h53M850 677h57M1209 500h44M659 489h36M357 584h18M1276 463h33M660 368h39M662 623h33M1343 506h44M822 539h61M842 715h39M1367 666h21M137 685h21M1549 410h33M11 755h30M908 522h18M1540 679h62M359 371h45M825 550h47M91 479h44M103 528h50M1533 379h48M1639 580h59M1197 627h31M1490 410h65M74 693h31M1034 481h46M1620 483h61M1420 752h37M675 613h27M166 540h55M1206 397h61M1641 758h67M517 493h56M1062 572h20M482 716h61M612 737h51M318 673h31M1058 539h17M627 504h51M1552 547h23M1562 398h42M209 542h24M901 500h26M407 658h23M55 511h43M1582 385h47M1058 671h54M437 596h69M1099 634h60M1440 539h66M1671 519h37M435 651h52M612 408h26M1547 473h68M448 694h28M8 551h16M1444 522h48M1100 470h20M327 461h68M701 555h68M1757 428h61M808 682h29M179 577h62M643 621h50M928 627h65M1584 649h56M257 591h47M697 656h50M1355 469h45M1410 492h23M1559 416h56M554 372h31M1718 744h25M1677 431h33M193 457h37M559 412h57M993 625h56M645 726h44M1120 456h57M472 450h19M1126 634h58M1671 654h34M237 489h19M485 437h27M1201 750h59M1243 380h61M6 608h23M70 689h21M50 557h38M1120 647h47M1769 680h68M1753 379h41M807 630h54M607 428h37M345 652h43M351 639h26M1283 608h30M291 609h70M1430 537h21M228 395h46M1262 738h69M824 368h64M861 612h26M1131 640h39M1287 372h41M1126 654h17M1735 679h17M1653 612h66M273 357h57M1057 678h19M969 469h37M814 400h51M762 395h69M1507 392h35M1366 353h19M1231 595h44M785 640h29M619 483h20M1487 758h56M444 519h16M1377 715h59M652 570h68M1326 659h29M49 633h27M1062 635h32M119 356h35M486 665h25M539 518h53M1294 389h66M1479 363h61M1519 679h52M17 428h65M1171 591h51M255 390h69M1159 584h27M447 500h44M441 676h31M1359 442h26M683 500h50M417 362h39M817 642h20M852 421h28M210 378h35M1664 577h19M1525 395h67M426 420h63M148 459h66M1300 381h40M365 622h35M1749 547h25M1160 561h16M1316 570h28M1680 654h62M1602 384h27M22 739h28M1104 439h61M0 599h29M998 642h23M214 744h23M928 588h64M416 419h47M1700 460h67M92 725h21M1161 560h21M1013 424h53M130 654h49M1194 678h16M1205 641h51M1703 672h28M1599 445h55M1179 664h22M382 459h17M777 422h41M1510 709h47M27 569h55M1724 411h33M569 521h41M98 384h24M1295 490h42M1651 580h18M1231 508h54M246 429h47M1127 449h29M1092 720h26M1177 457h24M99 600h20M821 431h22M926 499h54M1378 394h19M859 454h52M229 541h49M122 658h57M91 468h57M189 379h24M757 489h22M190 683h34M453 542h69M1078 719h67M1508 686h30M666 495h36M1445 454h51M1492 405h45M1390 707h27M443 391h33M1415 443h19M1317 431h40M554 708h47M1044 690h44M740 711h52M768 644h39M931 686h58M395 655h59M1569 757h39M1261 731h26M585 650h25M1777 580h59M643 729h26M908 732h46M460 463h38M832 388h15M1274 657h28M1644 372h67M597 664h28M287 518h49M288 440h20M561 557h25M838 431h48M717 495h38M630 608h66M1306 739h23M604 737h45M48 483h41M646 717h34M1652 612h41M688 600h58M285 633h16M106 680h23M159 729h39M1329 702h36M68 373h22M1259 608h21M641 751h39M1254 422h25M624 652h18M1626 580h23M1093 480h36M868 463h66M1019 722h47M1659 386h58M492 397h63M173 552h55M713 740h41M1331 409h52M1756 572h56M1587 364h41M329 406h60M330 555h33M1652 544h58M1726 666h50M1432 630h56M285 630h45M298 406h41M1047 416h64M1718 508h45M51 434h22M644 739h50M114 354h45M1267 351h18M1722 478h46M916 483h68M196 656h30M1766 606h51M453 408h24M1046 678h24M1021 580h38M27 374h38M1345 449h60M165 546h36M321 378h20M158 616h38M910 734h28M762 418h17M104 558h33M1319 644h43M1190 528h51M1604 351h27M595 459h52M712 632h39M177 556h42M1190 553h59M1660 684h41M1423 396h33M1684 582h26M858 488h36M1045 441h30M895 522h52M908 504h31M378 535h35M639 659h55M1129 634h30M641 363h68M1191 746h59M867 501h30M759 429h58M212 720h39M1058 455h16M592 629h49M36 626h49M356 701h65M1041 586h33M578 614h48M217 437h32M1382 695h45M783 757h20M378 351h20M656 527h43M1247 562h69M372 710h35M1093 581h31M602 521h68M1201 554h41M307 615h53M1145 406h49M905 479h45M859 603h22M1007 659h35M1723 687h51M1294 460h62M782 690h53M1533 433h64M46 488h19M1109 400h24M1759 530h59M1646 682h55M1532 409h53M500 655h61M1235 512h27M1695 501h43M1169 516h44M168 463h50M670 587h27M981 597h49M1693 428h21M338 545h45" stroke="#f3f2f5" stroke-width="1.6" opacity="0.8"/><path d="M256 398h32M1209 525h32M805 473h59M434 586h44M70 624h57M1556 479h53M1030 537h61M842 622h18M299 398h18M230 452h37M143 534h45M656 582h67M1598 670h63M697 514h21M180 499h16M647 400h62M965 361h44M297 666h44M586 441h60M1515 680h60M50 465h29M1700 533h67M350 434h49M1493 547h51M151 621h65M1333 546h25M226 412h65M260 689h69M1725 616h44M448 470h28M461 522h22M629 538h47M987 672h21M1088 557h43M804 569h41M130 624h58M1569 747h27M708 550h69M1109 560h19M265 727h46M129 735h50M149 701h19M806 489h45M445 356h55M1455 527h42M699 558h53M609 691h54M150 695h63M280 533h29M1728 574h28M1041 567h56M1750 411h55M78 692h64M896 692h59M1038 716h53M186 693h46M851 630h57M108 460h52M373 738h27M1458 559h64M250 491h32M661 511h70M181 692h31M663 742h64M297 416h26M883 440h65M1043 350h37M194 413h44M1673 646h51M813 576h17M227 453h50M199 379h44M536 539h68M394 662h31M107 511h64M88 544h35M1702 603h29M562 463h15M416 545h68M1649 425h59M60 577h33M416 521h49M844 686h61M1539 534h29M1681 393h48M112 392h37M1136 387h24M728 466h32M1294 434h15M753 686h37M819 417h16M1138 723h20M1646 509h65M219 451h55M1489 398h48M1114 476h38M1131 384h55M1690 406h62M1301 684h26M1449 409h43M65 425h24M1208 717h24M1551 578h47M1417 459h69M1136 753h47M1095 527h43M1109 545h22M433 411h20M1147 532h67M721 447h18M355 599h43M86 715h58M413 366h33M1564 485h28M1121 634h52M834 694h53M377 605h19M257 361h21M1231 610h53M117 592h35M1456 715h19M199 364h62M1713 557h62M55 519h39M2 433h57M8 551h42M328 553h34M1243 554h21M144 673h53M945 659h56M619 484h24M583 428h69M690 364h37M252 598h37M1614 526h47M748 444h55M1375 637h62M1140 536h32M174 522h58M1105 518h52M180 586h45M729 739h27M697 663h22M24 522h38M626 459h27M1670 566h27M697 437h22M1439 610h41M402 745h34M757 426h15M1650 700h18M1610 671h23M1125 356h16M1607 675h24M1081 670h52M1400 694h26M943 654h39M873 554h45M12 695h41M1707 381h50M51 600h53M1595 364h55M900 750h51M588 480h31M1128 672h17M11 428h66M1169 674h65M1096 607h53M1140 733h18M70 399h60M270 356h15M216 746h20M1304 427h18M1117 641h40M553 649h24M864 375h35M780 628h23M685 672h67M1007 470h18M1250 689h33M762 714h36M3 458h38M1450 714h17M1513 681h53M616 385h45M321 637h35M1772 503h21M923 358h17M1385 525h67M990 707h40M213 743h29M797 415h68M1397 641h51M99 409h57M1203 473h48M64 730h27M172 731h61M1268 577h23M565 720h21M647 756h70M487 434h49M1441 487h61M1550 459h25M652 417h35M215 643h60M570 642h36M1242 430h16M721 406h48M1492 566h37M774 752h59M1723 668h67M543 615h22M156 574h61M1013 617h26M506 755h31M110 509h39M194 442h68M275 488h34M1547 352h57M327 475h23M1004 554h66M1218 510h35M176 504h37M1590 633h60M1120 597h34M1131 367h38M885 577h30M178 420h44M301 459h20M97 715h47M1654 700h32M1450 475h48M1277 441h32M716 377h22M1484 402h39M1430 415h34M670 743h26M1255 457h64M481 666h36M315 699h33M1615 668h64M235 463h17M1179 494h38M1117 424h21M198 674h27M1682 524h66M552 406h54M1663 494h31M252 581h33M974 662h24M1064 539h57M107 465h26M1763 658h20M1634 614h50M330 612h62M299 672h61M655 576h35M425 367h46M1457 639h65M602 530h52M575 539h68M1538 749h68M1441 375h52M1150 473h34M151 621h35M943 453h42M781 704h45M1345 397h69M1257 525h64M1550 581h65M299 656h34M1073 391h45M343 533h61M202 359h21M329 577h31M608 412h43M1422 365h25M1502 511h63M135 485h27M466 583h44M1763 364h46M1550 667h50M645 465h59M1668 629h32M536 476h55M1666 490h66M142 423h47M634 668h39M334 570h63M1640 437h33M102 520h18M823 356h66M1755 373h49M957 591h46M265 423h56M1423 539h33M192 651h19M714 704h18M728 727h67M411 433h57M530 758h27M863 715h24M1062 536h47M373 712h35M1534 425h63M529 360h21M17 724h23M603 727h54M1741 363h28M765 393h16M241 526h25M382 747h64M77 559h37M644 354h53M967 575h53M1080 730h29M561 748h15M1517 559h48M1266 511h44M397 601h30M306 687h40M1482 387h50M358 523h59M1266 471h37M1441 494h36M1643 429h68M1602 660h16M909 688h52M714 367h52M1339 581h18M1264 548h18M743 589h70M556 455h62M1424 432h66M1004 483h30M518 641h59M808 733h39M179 389h58M737 620h29M1219 413h18M1652 388h42M1643 363h48M592 534h29M994 389h45M173 615h22M302 736h33M362 402h28M892 715h16M868 674h46M588 750h70M852 554h58M1335 611h26M1503 673h20M621 417h68M1325 405h61M1608 655h61M1049 528h60M1681 397h68M814 447h42M1218 641h37M1410 630h67M722 386h51M603 594h61M596 438h34M1246 531h51M215 630h17M398 715h49M937 350h25M669 731h64M135 606h39M646 750h18M1215 579h40M578 406h67M1738 616h59M676 745h54M493 416h47M1712 459h26M800 693h50M1469 582h34M1339 628h38M198 476h50M1432 493h25M945 564h52M892 699h52M717 585h30M1401 694h23M1340 555h64M1320 687h51M233 639h54M489 378h48M105 533h46M1119 489h33M387 675h26M1437 570h17M910 591h27M996 638h69M1685 727h55M111 434h16M79 422h35M273 669h41M1620 676h41M372 453h16M1301 508h60M238 355h27M673 354h61M126 483h49M1610 507h21M224 432h40M1196 643h28M1230 543h23M1065 376h28M406 511h58M427 732h27M1729 641h25M289 560h21M1581 726h15M988 687h43M1324 360h61M626 389h55M1355 411h48M724 601h51M1302 677h65M1274 363h52M765 710h25M1743 618h66M1575 728h33M186 688h32M943 616h45M724 725h53M159 437h31M24 457h54M313 530h53M1714 614h48M201 552h68M26 700h22M646 646h23M1545 371h51M1322 581h63M1075 617h23M1604 425h27M780 408h26M1037 735h37M909 739h42M1776 537h27M572 517h34M41 503h24M727 714h51M515 468h68M746 567h62M1169 590h59M1710 429h19M420 500h44M1702 435h38M722 523h19M1675 587h35M1201 416h35M1363 693h50M1253 746h26M535 455h60M124 352h25M7 444h30M1754 358h21M1109 636h29M1417 679h20M340 640h59M411 388h51M947 647h17M393 469h50M1371 689h54M1412 477h32M913 412h66M566 546h54M660 533h66M1100 393h40M495 365h69M152 511h20M1480 419h25M1727 398h29M1585 721h41M1073 468h41M1304 403h26M1518 482h25M607 427h38M1534 586h16M404 723h38M1577 660h28M1429 756h55M1458 492h61M1562 407h67M1203 618h18M973 537h34M1426 741h32M1590 543h64M644 499h68M222 725h17M889 624h23M1617 576h57M893 718h65M1121 679h38M918 422h48M359 590h55M1265 641h30M153 379h59M253 539h50M782 749h42M301 380h54M1227 511h23M1017 353h62M769 472h45M1513 674h47M324 397h64M658 509h35M958 463h33M102 458h55M1618 738h45M1551 659h48M322 600h52M450 445h69M1210 364h39M1023 535h63M599 512h67M681 633h15M1397 561h15M736 624h46M726 744h68M1606 675h58M1761 632h33M466 600h24M1653 660h23M1291 455h55M1163 464h35M1676 759h38M1437 661h40M1132 504h29M59 546h20M1277 649h34M1622 441h65M1519 532h20M823 687h68M476 501h45M1706 752h23M1119 581h67M1533 625h35M534 747h28M902 398h61M1216 730h70M739 720h47M23 433h25M181 732h30M1239 378h61M647 621h67M1290 576h35M1360 441h52M804 556h66M543 483h65M1506 616h24M353 386h53M125 573h69M859 402h53M1027 750h17M1036 646h34M652 642h30M778 351h20M1537 611h24M1274 397h36M6 367h34M1771 481h65M1537 591h68M945 463h57M1388 562h29M1259 686h42M415 672h51M599 395h59M1265 717h62M781 523h32M326 415h30M1515 486h62M674 355h35M645 720h21M427 701h28M670 366h59M478 668h41M97 506h28M1421 393h29M907 552h35M1697 501h21M945 484h33M714 416h51M793 516h28M813 691h36M51 440h68M1206 574h49M1016 441h39M1087 364h66M1471 563h16M495 727h65M163 729h45M1397 537h26M47 659h56M634 436h34M1632 543h43M352 646h34M3 677h29M1381 470h62M1205 684h39M905 411h27M689 411h25M895 693h16M354 366h57" stroke="#d2d1d4" stroke-width="1.3" opacity="0.7"/></g>
<path d="M1563.1,428.7L121.0,674.9" stroke="#6b6bd6" stroke-width="1.4"/>
<path d="M-275.8,474.1L2022.6,628.2" stroke="#dd7a8a" stroke-width="1.1"/>
<polygon points="446.3,355.0 2719.0,505.0 1303.5,755.5 -1021.0,597.0" fill="none" stroke="#58575a" stroke-width="1.8"/>
</svg>
<svg class="a" style="left:880px;top:500px" width="130" height="100" viewBox="880 500 130 100">
<polygon points="895.5,513 922,508 996,514 970,518" fill="#7b7a78" stroke="#2a2a2a" stroke-width="1.3"/>
<polygon points="895.5,513 970,518 970,584 895.5,579.6" fill="#72716f" stroke="#2a2a2a" stroke-width="1.3"/>
<polygon points="970,518 996,514 996,580 970,584" fill="#757472" stroke="#2a2a2a" stroke-width="1.3"/>
</svg>
<div class="a" style="left:211px;top:141px;width:132px;height:507px;background:#eeedf0;border:1px solid #8a898c;box-shadow:1px 1px 2px rgba(0,0,0,0.15)"></div>
<div class="a" style="left:343px;top:145px;width:5px;height:22px;background:#dddcdf"></div>
<div class="a" style="left:346px;top:150px;width:1px;height:12px;background:#555"></div>
<div class="a" style="left:215px;top:209px;width:120px;height:20px;background:#b9b8bb"></div>
<div class="a" style="left:215px;top:166px;width:123px;height:2px;background:#a9a8ab"></div>
<div class="a" style="left:215px;top:401px;width:123px;height:2px;background:#a9a8ab"></div>
<div class="a" style="left:215px;top:623px;width:123px;height:2px;background:#a9a8ab"></div>
<div class="a" style="left:232px;top:147px;font-size:10.5px;font-weight:bold;color:#2b2b2b;white-space:nowrap;line-height:14px;letter-spacing:-0.9px">スケッチを作成</div>
<svg class="a" style="left:214px;top:145px" width="20" height="20" viewBox="0 0 20 20"><rect x="1.5" y="2.5" width="14.5" height="14.5" rx="1" fill="#c4c4c6" stroke="#333" stroke-width="1.6"/><path d="M3.5 5v10h8" stroke="#555" stroke-width="0.8" fill="none"/><path d="M8 10l6.5-6.5 2 2L10 12l-2.5 0.5z" fill="#e8cc40" stroke="#333" stroke-width="0.8"/><path d="M12 12h2v2.5h2.5v2H14V19h-2v-2.5H9.5v-2H12z" fill="#fff" stroke="#333" stroke-width="0.7"/></svg>
<div class="a" style="left:232px;top:170px;font-size:10.5px;font-weight:bold;color:#2b2b2b;white-space:nowrap;line-height:14px;letter-spacing:-0.9px">線分</div>
<div class="a" style="left:306px;top:170px;font-size:10px;color:#444;line-height:14px">L</div>
<svg class="a" style="left:213px;top:168px" width="20" height="18"><path d="M3 13.5H10.5M10.5 3.5a5 5 0 0 1 0 10" stroke="#333" stroke-width="1.6" fill="none"/><rect x="1.2" y="12" width="3" height="3" fill="#2050b0"/><rect x="9" y="12" width="3" height="3" fill="#2050b0"/><rect x="9" y="2" width="3" height="3" fill="#2050b0"/></svg>
<div class="a" style="left:232px;top:191px;font-size:10.5px;font-weight:bold;color:#2b2b2b;white-space:nowrap;line-height:14px;letter-spacing:-0.9px">長方形</div>
<div class="a" style="left:327px;top:193px;width:0;height:0;border-left:6px solid #222;border-top:5px solid transparent;border-bottom:5px solid transparent"></div>
<div class="a" style="left:232px;top:212px;font-size:10.5px;font-weight:bold;color:#2b2b2b;white-space:nowrap;line-height:14px;letter-spacing:-0.9px">円</div>
<div class="a" style="left:327px;top:214px;width:0;height:0;border-left:6px solid #222;border-top:5px solid transparent;border-bottom:5px solid transparent"></div>
<div class="a" style="left:232px;top:232px;font-size:10.5px;font-weight:bold;color:#2b2b2b;white-space:nowrap;line-height:14px;letter-spacing:-0.9px">円弧</div>
<div class="a" style="left:327px;top:234px;width:0;height:0;border-left:6px solid #222;border-top:5px solid transparent;border-bottom:5px solid transparent"></div>
<div class="a" style="left:232px;top:252px;font-size:10.5px;font-weight:bold;color:#2b2b2b;white-space:nowrap;line-height:14px;letter-spacing:-0.9px">ポリゴン</div>
<div class="a" style="left:327px;top:254px;width:0;height:0;border-left:6px solid #222;border-top:5px solid transparent;border-bottom:5px solid transparent"></div>
<div class="a" style="left:232px;top:274px;font-size:10.5px;font-weight:bold;color:#2b2b2b;white-space:nowrap;line-height:14px;letter-spacing:-0.9px">楕円</div>
<svg class="a" style="left:213px;top:274px" width="20" height="14"><ellipse cx="10" cy="7" rx="8" ry="4.5" fill="#c8c8ca" stroke="#333" stroke-width="1.5"/><path d="M3 7h14" stroke="#555" stroke-width="0.8"/><circle cx="10" cy="7" r="1.8" fill="#2050b0"/><circle cx="18" cy="7" r="1.5" fill="#2050b0"/><circle cx="10" cy="2.5" r="1.5" fill="#2050b0"/></svg>
<div class="a" style="left:232px;top:295px;font-size:10.5px;font-weight:bold;color:#2b2b2b;white-space:nowrap;line-height:14px;letter-spacing:-0.9px">スロット</div>
<div class="a" style="left:327px;top:297px;width:0;height:0;border-left:6px solid #222;border-top:5px solid transparent;border-bottom:5px solid transparent"></div>
<div class="a" style="left:232px;top:316px;font-size:10.5px;font-weight:bold;color:#2b2b2b;white-space:nowrap;line-height:14px;letter-spacing:-0.9px">スプライン</div>
<div class="a" style="left:327px;top:318px;width:0;height:0;border-left:6px solid #222;border-top:5px solid transparent;border-bottom:5px solid transparent"></div>
<div class="a" style="left:232px;top:337px;font-size:10.5px;font-weight:bold;color:#2b2b2b;white-space:nowrap;line-height:14px;letter-spacing:-0.9px">円錐曲線</div>
<svg class="a" style="left:214px;top:335px" width="16" height="18"><path d="M2.5 15Q8 -2 13.5 15" stroke="#333" stroke-width="1.5" fill="none"/><circle cx="2.5" cy="15" r="1.8" fill="#2050b0"/><circle cx="13.5" cy="15" r="1.8" fill="#2050b0"/><path d="M8 1v4M6 3h4" stroke="#333" stroke-width="1"/></svg>
<div class="a" style="left:232px;top:359px;font-size:10.5px;font-weight:bold;color:#2b2b2b;white-space:nowrap;line-height:14px;letter-spacing:-0.9px">点</div>
<svg class="a" style="left:214px;top:358px" width="16" height="16"><path d="M8 1v14M1 8h14" stroke="#333" stroke-width="1.2"/><circle cx="8" cy="8" r="1.8" fill="#2050b0"/></svg>
<div class="a" style="left:232px;top:382px;font-size:10.5px;font-weight:bold;color:#2b2b2b;white-space:nowrap;line-height:14px;letter-spacing:-0.9px">テキスト</div>
<div class="a" style="left:214px;top:379px;font-size:17px;font-weight:bold;color:#333;line-height:20px">A</div>
<div class="a" style="left:232px;top:405px;font-size:10.5px;font-weight:bold;color:#2b2b2b;white-space:nowrap;line-height:14px;letter-spacing:-0.9px">フィレット</div>
<svg class="a" style="left:214px;top:404px" width="16" height="16"><path d="M2 15V7a5 5 0 0 1 5-5h8" stroke="#333" stroke-width="1.5" fill="none"/><circle cx="9" cy="9" r="1" fill="#333"/></svg>
<div class="a" style="left:232px;top:427px;font-size:10.5px;font-weight:bold;color:#2b2b2b;white-space:nowrap;line-height:14px;letter-spacing:-0.9px">トリム</div>
<div class="a" style="left:306px;top:427px;font-size:10px;color:#444;line-height:14px">T</div>
<svg class="a" style="left:214px;top:426px" width="18" height="16"><path d="M1 8h16" stroke="#555" stroke-width="1.3" stroke-dasharray="2 1.5"/><path d="M4 13L9 3" stroke="#2050b0" stroke-width="1.5"/></svg>
<div class="a" style="left:232px;top:449px;font-size:10.5px;font-weight:bold;color:#2b2b2b;white-space:nowrap;line-height:14px;letter-spacing:-0.9px">延長</div>
<svg class="a" style="left:214px;top:448px" width="18" height="16"><path d="M1 8h10" stroke="#555" stroke-width="1.3" stroke-dasharray="2 1.5"/><path d="M10 14L16 2" stroke="#2050b0" stroke-width="1.5"/></svg>
<div class="a" style="left:232px;top:472px;font-size:10.5px;font-weight:bold;color:#2b2b2b;white-space:nowrap;line-height:14px;letter-spacing:-0.9px">破断</div>
<svg class="a" style="left:214px;top:471px" width="18" height="16"><path d="M1 8h5M11 8h5" stroke="#666" stroke-width="1.2"/><path d="M8.5 2v12" stroke="#2050b0" stroke-width="1.2"/></svg>
<div class="a" style="left:232px;top:494px;font-size:10.5px;font-weight:normal;color:#5a5a5a;white-space:nowrap;line-height:14px;letter-spacing:-0.9px">スケッチの尺度</div>
<div class="a" style="left:215px;top:493px;width:14px;height:15px;background:#9a9a9a;border:1px solid #666"></div>
<div class="a" style="left:218px;top:496px;width:11px;height:7px;background:#d8d8d8"></div>
<div class="a" style="left:232px;top:517px;font-size:10.5px;font-weight:bold;color:#2b2b2b;white-space:nowrap;line-height:14px;letter-spacing:-0.9px">オフセット</div>
<div class="a" style="left:306px;top:517px;font-size:10px;color:#444;line-height:14px">O</div>
<svg class="a" style="left:214px;top:516px" width="18" height="16"><path d="M2 14h14M4 11h10V7a3 3 0 0 0-3-3H9a3 3 0 0 0-3 3v4" stroke="#2050b0" stroke-width="1.3" fill="none"/><path d="M2 14V9" stroke="#333" stroke-width="1.3"/></svg>
<div class="a" style="left:232px;top:539px;font-size:10.5px;font-weight:normal;color:#5a5a5a;white-space:nowrap;line-height:14px;letter-spacing:-0.9px">ミラー</div>
<svg class="a" style="left:214px;top:538px" width="18" height="16"><path d="M2 3h4v11H2zM12 3h4v11h-4z" stroke="#777" stroke-width="1.2" fill="#ccc"/><path d="M9 1v15" stroke="#555" stroke-dasharray="2 1"/></svg>
<div class="a" style="left:232px;top:561px;font-size:10.5px;font-weight:normal;color:#5a5a5a;white-space:nowrap;line-height:14px;letter-spacing:-0.9px">円形状パターン</div>
<svg class="a" style="left:214px;top:559px" width="18" height="18"><circle cx="9" cy="9" r="6" stroke="#555" stroke-width="1.2" fill="none"/><rect x="7" y="1" width="4" height="4" fill="#ccc" stroke="#555"/><rect x="13" y="7" width="4" height="4" fill="#ccc" stroke="#555"/><rect x="7" y="13" width="4" height="4" fill="#ccc" stroke="#555"/><rect x="1" y="7" width="4" height="4" fill="#ccc" stroke="#555"/></svg>
<div class="a" style="left:232px;top:583px;font-size:10.5px;font-weight:normal;color:#5a5a5a;white-space:nowrap;line-height:14px;letter-spacing:-0.9px">矩形状パターン</div>
<svg class="a" style="left:214px;top:581px" width="18" height="18"><rect x="1" y="1" width="4" height="4" fill="#ccc" stroke="#555"/><rect x="12" y="1" width="4" height="4" fill="#ccc" stroke="#555"/><rect x="1" y="12" width="4" height="4" fill="#ccc" stroke="#555"/><rect x="12" y="12" width="4" height="4" fill="#ccc" stroke="#555"/><path d="M5 3h7M3 5v7M5 14h7" stroke="#555" stroke-width="1"/></svg>
<div class="a" style="left:232px;top:605px;font-size:10.5px;font-weight:bold;color:#2b2b2b;white-space:nowrap;line-height:14px;letter-spacing:-0.9px">プロジェクト/含める</div>
<div class="a" style="left:327px;top:607px;width:0;height:0;border-left:6px solid #222;border-top:5px solid transparent;border-bottom:5px solid transparent"></div>
<div class="a" style="left:232px;top:627px;font-size:10.5px;font-weight:normal;color:#5a5a5a;white-space:nowrap;line-height:14px;letter-spacing:-0.9px">スケッチ寸法</div>
<div class="a" style="left:306px;top:627px;font-size:10px;color:#444;line-height:14px">D</div>
<svg class="a" style="left:214px;top:626px" width="18" height="16"><path d="M1.5 1v14M16.5 1v14M3 6h12" stroke="#555" stroke-width="1.2"/><path d="M3 6l3-2v4zM15 6l-3-2v4z" fill="#555"/></svg>
<div class="a" style="left:336px;top:209px;width:171px;height:116px;background:#eeedf0;border:1px solid #8a898c;box-shadow:1px 1px 2px rgba(0,0,0,0.2)"></div>
<div class="a" style="left:340px;top:212px;width:162px;height:22px;background:#b9b8bb"></div>
<svg class="a" style="left:340px;top:214px" width="17" height="17"><defs><radialGradient id="sg222" cx="0.4" cy="0.35" r="0.7"><stop offset="0" stop-color="#f4f4f4"/><stop offset="1" stop-color="#7a7a7c"/></radialGradient></defs><circle cx="8.5" cy="8.5" r="6.3" fill="url(#sg222)" stroke="#444" stroke-width="1.3"/><circle cx="8.5" cy="2.3" r="1.6" fill="#2a50b0"/><circle cx="8.5" cy="14.7" r="1.6" fill="#2a50b0"/><path d="M5 11l7-5" stroke="#555" stroke-width="0.9"/></svg>
<div class="a" style="left:359px;top:215px;font-size:10px;font-weight:bold;color:#333;white-space:nowrap;line-height:14px;letter-spacing:-0.6px">中心と直径で指定した円</div>
<div class="a" style="left:471px;top:215px;font-size:10.5px;color:#333;line-height:14px">C</div>
<svg class="a" style="left:340px;top:236px" width="17" height="17"><defs><radialGradient id="sg244" cx="0.4" cy="0.35" r="0.7"><stop offset="0" stop-color="#f4f4f4"/><stop offset="1" stop-color="#7a7a7c"/></radialGradient></defs><circle cx="8.5" cy="8.5" r="6.3" fill="url(#sg244)" stroke="#444" stroke-width="1.3"/><circle cx="8.5" cy="2.3" r="1.6" fill="#2a50b0"/><circle cx="8.5" cy="14.7" r="1.6" fill="#2a50b0"/><path d="M5 11l7-5" stroke="#555" stroke-width="0.9"/></svg>
<div class="a" style="left:359px;top:237px;font-size:10px;font-weight:bold;color:#333;white-space:nowrap;line-height:14px;letter-spacing:-0.6px">2 点指定の円</div>
<svg class="a" style="left:340px;top:259px" width="17" height="17"><defs><radialGradient id="sg267" cx="0.4" cy="0.35" r="0.7"><stop offset="0" stop-color="#f4f4f4"/><stop offset="1" stop-color="#7a7a7c"/></radialGradient></defs><circle cx="8.5" cy="8.5" r="6.3" fill="url(#sg267)" stroke="#444" stroke-width="1.3"/><circle cx="8.5" cy="2.3" r="1.6" fill="#2a50b0"/><circle cx="8.5" cy="14.7" r="1.6" fill="#2a50b0"/><path d="M5 11l7-5" stroke="#555" stroke-width="0.9"/></svg>
<div class="a" style="left:359px;top:260px;font-size:10px;font-weight:bold;color:#333;white-space:nowrap;line-height:14px;letter-spacing:-0.6px">3 点指定の円</div>
<svg class="a" style="left:340px;top:281px" width="17" height="17"><defs><radialGradient id="sg289" cx="0.4" cy="0.35" r="0.7"><stop offset="0" stop-color="#f4f4f4"/><stop offset="1" stop-color="#7a7a7c"/></radialGradient></defs><circle cx="8.5" cy="8.5" r="6.3" fill="url(#sg289)" stroke="#444" stroke-width="1.3"/><circle cx="8.5" cy="2.3" r="1.6" fill="#2a50b0"/><circle cx="8.5" cy="14.7" r="1.6" fill="#2a50b0"/><path d="M5 11l7-5" stroke="#555" stroke-width="0.9"/></svg>
<div class="a" style="left:359px;top:282px;font-size:10px;font-weight:bold;color:#333;white-space:nowrap;line-height:14px;letter-spacing:-0.6px">2 接線指定の円</div>
<svg class="a" style="left:340px;top:303px" width="17" height="17"><defs><radialGradient id="sg311" cx="0.4" cy="0.35" r="0.7"><stop offset="0" stop-color="#f4f4f4"/><stop offset="1" stop-color="#7a7a7c"/></radialGradient></defs><circle cx="8.5" cy="8.5" r="6.3" fill="url(#sg311)" stroke="#444" stroke-width="1.3"/><circle cx="8.5" cy="2.3" r="1.6" fill="#2a50b0"/><circle cx="8.5" cy="14.7" r="1.6" fill="#2a50b0"/><path d="M5 11l7-5" stroke="#555" stroke-width="0.9"/></svg>
<div class="a" style="left:359px;top:304px;font-size:10px;font-weight:bold;color:#333;white-space:nowrap;line-height:14px;letter-spacing:-0.6px">3 接線指定の円</div>
<svg class="a" style="left:381px;top:214px" width="26" height="28"><path d="M1 1v17l4-4 3.5 7 3-1.5-3.5-7h6z" fill="#fff" stroke="#111" stroke-width="1.2"/><circle cx="17" cy="19" r="6" fill="#d8d8d8" stroke="#555" stroke-width="1.2"/><path d="M14 22l6-6M17 16v6M14 19h6" stroke="#333" stroke-width="0.9"/></svg>
<div class="a" style="left:510px;top:216px;width:305px;height:70px;background:#474747;border-radius:7px"></div>
<div class="a" style="left:523px;top:235px;font-size:10.5px;font-weight:bold;color:#f4f4f4;white-space:nowrap;line-height:14px;letter-spacing:-0.2px">中心点と直径を使用して円を作成します。</div>
<div class="a" style="left:523px;top:258px;font-size:10.5px;font-weight:bold;color:#f4f4f4;white-space:nowrap;line-height:14px;letter-spacing:-0.2px">選択して中心点を定義し、直径を指定します。</div>
<div class="a" style="left:314px;top:196px;width:203px;height:50px;border:5px solid #e8161e"></div>
<!-- viewcube -->
<div class="a" style="left:1761px;top:118px;width:41px;height:48px;background:linear-gradient(135deg,#e2e1e4,#cfced1);border:1.3px dashed #555"></div>
<div class="a" style="left:1802px;top:118px;width:20px;height:46px;background:linear-gradient(135deg,#d8d7da,#c5c4c7);border:1.3px dashed #555;border-left:none"></div>
<div class="a" style="left:1767px;top:126px;font-size:22px;color:#4a4a4a;line-height:26px">前</div>
<div class="a" style="left:1805px;top:129px;font-size:15px;color:#555;line-height:20px">右</div>
<div class="a" style="left:1770px;top:166px;width:60px;height:8px;background:radial-gradient(ellipse,rgba(0,0,0,0.18),rgba(0,0,0,0) 70%)"></div>
<div class="a" style="left:1782px;top:98px;font-size:12px;color:#5cb060;line-height:14px">Y</div>
<div class="a" style="left:1786px;top:110px;width:2px;height:8px;background:#5cb060"></div>
<div class="a" style="left:1748px;top:157px;font-size:12px;color:#5a5ac8;line-height:14px">Z</div>
<div class="a" style="left:1756px;top:163px;width:6px;height:2px;background:#5a5ac8"></div>
<div class="a" style="left:1831px;top:154px;font-size:12px;color:#d86070;line-height:14px">X</div>
<div class="a" style="left:1822px;top:161px;width:8px;height:2px;background:#e08080"></div>
<!-- side widget -->
<div class="a" style="left:1784px;top:606px;width:44px;height:47px;background:#e6e5e8;border:1px solid #9a999c;box-shadow:1px 1px 2px rgba(0,0,0,0.2)"></div>
<div class="a" style="left:1787px;top:614px;width:14px;height:15px;background:#1a22b8;border:1px solid #0a3a3a"></div>
<div class="a" style="left:1791px;top:614px;font-size:11px;font-weight:bold;color:#f0f030;line-height:14px">L</div>
<div class="a" style="left:1808px;top:614px;width:15px;height:14px;background:#1a7a1a"></div>
<div class="a" style="left:1808px;top:613px;font-size:11px;color:#fff;line-height:14px">英</div>
<div class="a" style="left:1787px;top:634px;width:14px;height:15px;background:#a01818"></div>
<div class="a" style="left:1787px;top:634px;font-size:11px;color:#fff;line-height:14px">理</div>

<div class="a" style="left:71px;top:923px;width:278px;height:23px;background:#dedde0;border-right:1px solid #c8c7ca"></div>
<div class="a" style="left:92px;top:927px;font-size:10px;color:#444;white-space:nowrap;line-height:14px">コメント</div>
<div class="a" style="left:330px;top:930px;width:9px;height:9px;border-radius:50%;background:#333"></div>
<div class="a" style="left:332px;top:934px;width:5px;height:1.3px;background:#ddd"></div><div class="a" style="left:334px;top:932px;width:1.3px;height:5px;background:#ddd"></div>
<div class="a" style="left:345px;top:929px;width:1px;height:11px;background:#777"></div><div class="a" style="left:347px;top:929px;width:1px;height:11px;background:#777"></div>
<div class="a" style="left:841px;top:925px;width:236px;height:21px;background:#dcdbde"></div>
<svg class="a" style="left:841px;top:925px" width="236" height="21">
<g stroke="#444" fill="none" stroke-width="1.5">
<path d="M11 2v17"/><path d="M6 10.5a6 2.8 0 1 0 10-1.5" stroke-width="1.6"/><path d="M3 13.5l4-3 0.5 4z" fill="#444"/><path d="M9 4l2-2 2 2" stroke-width="1.3"/>
<path d="M24 8l3 3 3-3z" fill="#444" stroke="none"/>
<rect x="35" y="6" width="13" height="11" rx="1"/><rect x="38" y="10" width="7" height="3" fill="#777"/><path d="M36 6l4-3M41 5l3-2"/>
<path d="M57.5 11V5a1.2 1.2 0 0 1 2.4 0V10M59.9 10V3a1.2 1.2 0 0 1 2.4 0V10M62.3 10V3.5a1.2 1.2 0 0 1 2.4 0V10M64.7 10.5V5.5a1.2 1.2 0 0 1 2.4 0V13c0 3-2 6-5.5 6h-1.5c-2 0-3-1-4-3l-3-4.5a1.1 1.1 0 0 1 2-1.2l2.2 2.7" stroke-width="1"/>
<circle cx="87" cy="9" r="4.5"/><path d="M90 12l4 4" stroke-width="2.2"/><path d="M94 3v5M92 5h4"/>
<circle cx="110" cy="9" r="5"/><path d="M114 13l4 4" stroke-width="2.2"/><path d="M104 3h14v15" stroke-dasharray="1.5 1.5" stroke-width="1"/>
<path d="M127 9l3 3 3-3z" fill="#444" stroke="none"/>
<rect x="146" y="4" width="14" height="11" rx="1.5" fill="#8ea4c8"/><rect x="150" y="15" width="6" height="3"/>
<path d="M163 9l3 3 3-3z" fill="#444" stroke="none"/>
<rect x="175" y="4" width="13" height="13" fill="#999" stroke-width="1"/><path d="M178 4v13M181 4v13M184 4v13M175 7h13M175 10h13M175 13h13" stroke="#ddd" stroke-width="0.8"/>
<path d="M191 9l3 3 3-3z" fill="#444" stroke="none"/>
<rect x="203" y="4" width="14" height="13" fill="#6d84a8" stroke="#3c4c66"/><path d="M210 4v13M203 10.5h14" stroke="#dcdbde" stroke-width="1.2"/>
<path d="M220 9l3 3 3-3z" fill="#444" stroke="none"/>
</g></svg>
<div class="a" style="left:71px;top:948px;width:1777px;height:4px;background:linear-gradient(#e6e5e8,#a4a3a6 45%,#a4a3a6 55%,#e0dfe2)"></div>
<div class="a" style="left:71px;top:951px;width:1777px;height:46px;background:#e0dfe2"></div>
<svg class="a" style="left:71px;top:955px" width="230" height="40">
<g fill="#555"><path d="M7 14v17h2V14zM9 22l10-7v14z"/><path d="M26 22l10-7v14zM36 18h2v9h-2z"/><path d="M50 15l13 7.5-13 7.5z"/><path d="M73 18h2v9h-2zM75 15l11 7.5-11 7.5z"/><path d="M96 15l11 7.5-11 7.5zM107 14h2v17h-2z"/></g>
<rect x="131" y="12" width="14" height="13" fill="#ddd" stroke="#444" stroke-width="1.3"/><path d="M136 22l7-8" stroke="#e0b020" stroke-width="3"/>
<rect x="153" y="14" width="9" height="11" fill="#9ab0cc" stroke="#555"/><path d="M165 25V12M163 14l2-3 2 3" stroke="#444" fill="none"/>
<rect x="176" y="12" width="14" height="13" fill="#ddd" stroke="#444" stroke-width="1.3"/><path d="M181 22l7-8" stroke="#e0b020" stroke-width="3"/>
<rect x="198" y="14" width="9" height="11" fill="#9ab0cc" stroke="#555"/><path d="M210 25V12" stroke="#444"/>
<path d="M212 5h10l-4 6v26h-2V11z" fill="#555"/>
<path d="M140 28v5h68v-5M163 28v5M186 28v5" stroke="#999" fill="none" stroke-width="1.2"/>
</svg>
<div class="a" style="left:71px;top:997px;width:1777px;height:34px;background:linear-gradient(#2c2c38,#101014)"></div>
<div class="a" style="left:71px;top:997px;width:41px;height:34px;background:#191930"></div>
<div class="a" style="left:112px;top:997px;width:318px;height:34px;background:linear-gradient(#a9a8ab,#6a6a6c 50%,#2a2a2a)"></div>
<svg class="a" style="left:81px;top:1006px" width="16" height="16"><path d="M0 2.5l6.5-1v6H0zM7.5 1.3L16 0v7.5H7.5zM0 8.5h6.5v6.5L0 14zM7.5 8.5H16V16l-8.5-1.2z" fill="#555a66"/></svg>
<div class="a" style="left:120px;top:1005px;width:19px;height:19px;border:2.5px solid #222;border-radius:50%"></div>
<div class="a" style="left:149px;top:1006px;font-size:13px;color:#1a1a1a;white-space:nowrap;line-height:16px">ここに入力して検索</div>
<svg class="a" style="left:405px;top:1005px" width="13" height="19"><rect x="3.5" y="1" width="6" height="10" rx="3" fill="none" stroke="#2a2a2a" stroke-width="1.3"/><path d="M1 8a5.5 5.5 0 0 0 11 0M6.5 14v4" stroke="#2a2a2a" stroke-width="1.3" fill="none"/></svg>
<div class="a" style="left:1025px;top:997px;width:45px;height:34px;background:#7a4a26;opacity:0.7"></div>
<div class="a" style="left:0;top:0;width:1920px;height:1080px;transform-origin:0 0;transform:translate(64px,22.9px) scale(0.935);opacity:0.6"><svg class="a" style="left:407px;top:1052px" width="18" height="16"><rect x="3" y="3" width="10" height="10" fill="none" stroke="#fff" stroke-width="1.4"/><path d="M1 1h14M1 15h14M16 3v3M16 9v3" stroke="#fff" stroke-width="1.4"/></svg>
<svg class="a" style="left:455px;top:1048px" width="25" height="25"><path d="M4.5 14.5H22a9.5 9.5 0 1 0-3 7" stroke="#1a8ae8" stroke-width="4.5" fill="none"/><path d="M6 12.5c2-6 10-7 14-1" stroke="#1a8ae8" stroke-width="3" fill="none"/></svg>
<svg class="a" style="left:502px;top:1049px" width="26" height="22"><path d="M1 3h9l2 2h13v16H1z" fill="#e8b830"/><path d="M1 7h24v14H1z" fill="#f8d868"/><path d="M8 14h10v7H8z" fill="#2a8ae0"/><path d="M11 17h4v4h-4z" fill="#f8d868"/></svg>
<svg class="a" style="left:552px;top:1050px" width="26" height="20"><path d="M1 8L13 1l12 7v11H1z" fill="#fff"/><path d="M1 8l12 6 12-6M9 13l6 4" stroke="#1f1c35" stroke-width="1.6" fill="none"/></svg>
<div class="a" style="left:601px;top:1048px;width:25px;height:25px;background:#c8c8c8;border:1px solid #777"></div>
<div class="a" style="left:602px;top:1048px;font-size:11px;color:#111;line-height:12px;font-weight:bold">知</div><div class="a" style="left:602px;top:1060px;font-size:9px;color:#333;line-height:11px;letter-spacing:-0.5px">Pro子</div>
<svg class="a" style="left:650px;top:1050px" width="26" height="22"><path d="M1 12L12 2l13 8-11 10z" fill="#8a9696"/><path d="M1 12l13 8 11-10" stroke="#5a6464" stroke-width="1.2" fill="none"/><path d="M6 9l10 6M9 6l10 6" stroke="#b0bcbc" stroke-width="1"/></svg>
<svg class="a" style="left:698px;top:1047px" width="26" height="26"><defs><radialGradient id="ff2" cx="0.6" cy="0.35" r="0.7"><stop offset="0" stop-color="#ffe040"/><stop offset="0.45" stop-color="#ff8a18"/><stop offset="1" stop-color="#e02a40"/></radialGradient></defs><circle cx="13" cy="13" r="11.5" fill="url(#ff2)"/><circle cx="12" cy="14" r="5.5" fill="#5a3ab8"/><path d="M6 8c4-3 9-2 11 3-3-1-6 0-7 3z" fill="#ff9a20"/></svg>
<div class="a" style="left:748px;top:1048px;width:24px;height:24px;background:#1010e0;"></div>
<div class="a" style="left:749px;top:1049px;font-size:19px;color:#fff;font-weight:bold;line-height:22px">探</div>
<svg class="a" style="left:796px;top:1048px" width="26" height="25"><path d="M9 4h15v17H9z" fill="#f4f4f4" stroke="#2a5aa8" stroke-width="1"/><path d="M13 8h9M13 11h9M13 14h9M13 17h9" stroke="#2a5aa8" stroke-width="1.2"/><path d="M1 2l12-1.5v24L1 23z" fill="#2a5aa8"/><path d="M3 8l1.5 8 2-6 2 6 1.5-8" stroke="#fff" stroke-width="1.3" fill="none"/></svg>
<div class="a" style="left:847px;top:1049px;width:22px;height:22px;background:#40c0d0;"></div>
<div class="a" style="left:848px;top:1049px;font-size:18px;color:#f0e020;font-weight:bold;line-height:22px;text-shadow:1px 1px 0 #2030c0">秀</div>
<svg class="a" style="left:896px;top:1049px" width="22" height="23"><path d="M2 5l14-4 5 3v15l-14 4-5-3z" fill="#3a8ad8"/><path d="M3 7l14-4M3 10l14-4M3 13l14-4M3 16l14-4M3 19l14-4" stroke="#e8f4ff" stroke-width="1.3"/><path d="M17 3v16l4-3V4" fill="#1a5aa0"/></svg>
<div class="a" style="left:944px;top:1048px;width:24px;height:24px;background:#f4e0c8;"></div>
<div class="a" style="left:948px;top:1049px;font-size:20px;color:#e88a20;font-weight:bold;line-height:22px">F</div>
<div class="a" style="left:994px;top:1048px;width:24px;height:24px;border-radius:50%;background:#2d8cff;border:2px solid #e8f0ff"></div>
<div class="a" style="left:999px;top:1056px;width:10px;height:8px;background:#fff;border-radius:1px"></div><div class="a" style="left:1009px;top:1057px;width:0;height:0;border-right:5px solid #fff;border-top:3px solid transparent;border-bottom:3px solid transparent"></div>
<svg class="a" style="left:1043px;top:1047px" width="24" height="26"><path d="M12 1L1 13l11 12 11-12z" fill="#111"/><path d="M14 3l-6 11h5l-3 9 8-12h-5z" fill="#4aa0f0"/></svg>
<svg class="a" style="left:1092px;top:1048px" width="24" height="26"><path d="M6 3l14-2v6L6 9z" fill="#e0b820"/><path d="M1 9h6v10H1z" fill="#3050b0"/><path d="M11 14h8v5h-8zM7 19h8v5H7z" fill="#c03040"/></svg>
<div class="a" style="left:1141px;top:1052px;width:22px;height:17px;border-radius:50% 50% 40% 50%;background:#cfe0ee;border:1px solid #789"></div>
<div class="a" style="left:1146px;top:1055px;width:4px;height:4px;border-radius:50%;background:#e04040"></div><div class="a" style="left:1152px;top:1054px;width:4px;height:4px;border-radius:50%;background:#40c040"></div>
<svg class="a" style="left:1150px;top:1047px" width="16" height="24"><path d="M14 1L4 22" stroke="#e0a040" stroke-width="2.5"/></svg></div>
<svg class="a" style="left:1560px;top:1000px" width="280" height="30"><g stroke="#5a5a5e" fill="none" stroke-width="1.6">
<circle cx="14" cy="8" r="3"/><circle cx="8" cy="14" r="3"/><path d="M3 22c0-4 2-5 5-5s5 1 5 5M10 15c1-2 2-3 4-3 3 0 5 2 5 5"/>
<path d="M40 18l6-6 6 6"/><path d="M60 18h14a4 4 0 0 0 0-8 5 5 0 0 0-9-2 4 4 0 0 0-5 4 3 3 0 0 0 0 6z" fill="#5a5a5e"/>
<path d="M85 20a10 10 0 0 1 10-10M88 20a7 7 0 0 1 7-7M91 20a4 4 0 0 1 4-4"/>
<path d="M104 13h3l4-4v14l-4-4h-3zM114 12c2 2 2 6 0 8M117 10c3 3 3 9 0 12"/>
<circle cx="131" cy="16" r="6" fill="#3a3a3e"/><path d="M128 13l6 6M134 13l-6 6"/>
<rect x="154" y="9" width="15" height="15" rx="1" fill="#5a5a5e"/><path d="M163 12v6a3 3 0 0 1-6 0" stroke="#222"/>
<rect x="252" y="8" width="14" height="11" fill="#5a5a5e"/>
</g></svg>
<div class="a" style="left:1752px;top:1000px;font-size:11px;color:#6a6a6e;white-space:nowrap;line-height:14px">15:50</div>
<div class="a" style="left:1742px;top:1016px;font-size:11px;color:#3a3a3e;white-space:nowrap;line-height:14px">2019/04/08</div>
<div class="a" style="left:71px;top:972px;width:1777px;height:25px;background:linear-gradient(rgba(0,0,0,0),rgba(0,0,0,0.2))"></div>
<div class="a" style="left:71px;top:997px;width:1777px;height:34px;background:linear-gradient(rgba(0,0,0,0),rgba(0,0,0,0.75))"></div>
<div class="a" style="left:71px;top:31px;width:3px;height:1000px;background:linear-gradient(90deg,rgba(0,0,0,0.6),rgba(0,0,0,0))"></div>
<div class="a" style="left:1845px;top:31px;width:3px;height:1000px;background:linear-gradient(90deg,rgba(0,0,0,0),rgba(0,0,0,0.6))"></div>
<div class="a" style="left:17px;top:975px;width:1887px;height:4px;border:1px solid #6a6a6a;border-radius:3px"></div>
<div class="a" style="left:17px;top:975px;width:898px;height:4px;background:#1f78e0;border:1px solid #151515;border-radius:3px"></div>
<svg class="a" style="left:1824px;top:966px" width="17" height="17"><circle cx="8.5" cy="8.5" r="5" fill="none" stroke="#555" stroke-width="3" stroke-dasharray="2.2 1.4"/><circle cx="8.5" cy="8.5" r="3.5" fill="none" stroke="#555" stroke-width="2"/></svg>
<div class="a" style="left:767px;top:991px;width:384px;height:29px;border:1px solid #6a6a80;border-radius:15px;background:rgba(120,120,128,0.45)"></div>
<div class="a" style="left:729px;top:999px;font-size:12px;color:#fff;white-space:nowrap;line-height:15px">02:00</div>
<svg class="a" style="left:780px;top:990px" width="380" height="36" viewBox="780 990 380 36"><g fill="#fff" stroke="#fff">
<path d="M807.5 1011.5C806 1007 802 1004 799 1001.5M797.5 1011.5C800 1009 804 1005 806 1001.5" fill="none" stroke-width="2.2"/>
<path d="M795.5 1002.5l2.5-4 3.5 3zM804 1001.5l3.5-3 2 4z" stroke="none"/>
<path d="M830 1000.5a5.6 5.6 0 1 0 4.5-0.9" fill="none" stroke-width="2.3"/><path d="M828 998.5l5.5-1.5-1 5z" stroke="none"/>
<rect x="868" y="1000" width="11" height="11" rx="1" stroke="none"/>
<path d="M917 999.5v12l-7.5-6zM926 999.5v12l-7.5-6z" stroke="none"/>
<path d="M993 999.5v12l7.5-6zM1002 999.5v12l7.5-6z" stroke="none"/>
<path d="M1036 1002.5h4l5.5-4.5v15l-5.5-4.5h-4z" stroke="none"/><path d="M1048 1001c1.8 2.5 1.8 6.5 0 9M1051 999c2.8 3.5 2.8 10.5 0 14M1054 997.5c3.5 4.5 3.5 12.5 0 17" fill="none" stroke-width="1.5"/>
</g><path d="M853 996v19" stroke="#777" stroke-width="1"/></svg>
<div class="a" style="left:894px;top:994px;width:46px;height:22px;border:1px solid #555;border-radius:7px"></div>
<div class="a" style="left:979px;top:994px;width:46px;height:22px;border:1px solid #555;border-radius:7px"></div>
<div class="a" style="left:1071px;top:1005px;width:57px;height:3px;background:#1f6fd0;border-radius:2px"></div>
<div class="a" style="left:1118px;top:999px;width:13px;height:13px;background:radial-gradient(circle at 50% 35%,#9cd0ff,#1a60c0);border-radius:50%;border:1px solid #0a3a80"></div>
<div class="a" style="left:938px;top:985px;width:43px;height:43px;border-radius:50%;background:linear-gradient(#9a9aa8,#3a3a48);border:1px solid #6a6a7a"></div>
<div class="a" style="left:940px;top:988px;width:38px;height:38px;border-radius:50%;background:radial-gradient(circle at 50% 30%,#8cc8ff,#1a6ad8 55%,#0a3a9a)"></div>
<div class="a" style="left:951px;top:996px;width:5px;height:20px;background:#fff;border-radius:1px"></div>
<div class="a" style="left:962px;top:996px;width:5px;height:20px;background:#fff;border-radius:1px"></div>
<div class="a" style="left:1877px;top:999px;width:16px;height:14px;border:1.5px solid #fff"></div>
<svg class="a" style="left:1879px;top:1001px" width="12" height="10"><path d="M2 9l7-7M5 2h4v4" stroke="#fff" stroke-width="1.6" fill="none"/></svg>
<svg class="a" style="left:1883px;top:39px" width="20" height="16"><rect x="1" y="1" width="5" height="5" fill="#fff"/><rect x="9" y="1" width="5" height="5" fill="#fff"/><rect x="1" y="9" width="5" height="5" fill="#fff"/><path d="M19 11.5H10M13 8l-3.5 3.5L13 15" stroke="#fff" stroke-width="1.8" fill="none"/></svg>
<div class="a" style="left:18px;top:39px;font-size:12.5px;color:#fff;white-space:nowrap;line-height:16px;transform:scaleX(0.7);transform-origin:0 0">マイ ムービー</div>
<div class="a" style="left:0;top:1040px;width:1920px;height:40px;background:#1f1c35"></div>
<svg class="a" style="left:16px;top:1052px" width="17" height="17"><path d="M0 2.4l7-1v6.8H0zM8 1.2L17 0v8.2H8zM0 9.2h7V16L0 15zM8 9.2h9V17l-9-1.2z" fill="#fff"/></svg>
<div class="a" style="left:48px;top:1040px;width:344px;height:40px;background:#f2f2f2"></div>
<div class="a" style="left:57px;top:1049px;width:22px;height:22px;border:3px solid #111;border-radius:50%"></div>
<div class="a" style="left:88px;top:1052px;font-size:13px;color:#222;white-space:nowrap;line-height:18px">ここに入力して検索</div>
<svg class="a" style="left:364px;top:1050px" width="14" height="20"><rect x="3.5" y="1" width="7" height="11" rx="3.5" fill="none" stroke="#222" stroke-width="1.4"/><path d="M1 9a6 6 0 0 0 12 0M7 15v4" stroke="#222" stroke-width="1.4" fill="none"/></svg>
<svg class="a" style="left:407px;top:1052px" width="18" height="16"><rect x="3" y="3" width="10" height="10" fill="none" stroke="#fff" stroke-width="1.4"/><path d="M1 1h14M1 15h14M16 3v3M16 9v3" stroke="#fff" stroke-width="1.4"/></svg>
<svg class="a" style="left:455px;top:1048px" width="25" height="25"><path d="M4.5 14.5H22a9.5 9.5 0 1 0-3 7" stroke="#1a8ae8" stroke-width="4.5" fill="none"/><path d="M6 12.5c2-6 10-7 14-1" stroke="#1a8ae8" stroke-width="3" fill="none"/></svg>
<svg class="a" style="left:502px;top:1049px" width="26" height="22"><path d="M1 3h9l2 2h13v16H1z" fill="#e8b830"/><path d="M1 7h24v14H1z" fill="#f8d868"/><path d="M8 14h10v7H8z" fill="#2a8ae0"/><path d="M11 17h4v4h-4z" fill="#f8d868"/></svg>
<svg class="a" style="left:552px;top:1050px" width="26" height="20"><path d="M1 8L13 1l12 7v11H1z" fill="#fff"/><path d="M1 8l12 6 12-6M9 13l6 4" stroke="#1f1c35" stroke-width="1.6" fill="none"/></svg>
<div class="a" style="left:601px;top:1048px;width:25px;height:25px;background:#c8c8c8;border:1px solid #777"></div>
<div class="a" style="left:602px;top:1048px;font-size:11px;color:#111;line-height:12px;font-weight:bold">知</div><div class="a" style="left:602px;top:1060px;font-size:9px;color:#333;line-height:11px;letter-spacing:-0.5px">Pro子</div>
<svg class="a" style="left:650px;top:1050px" width="26" height="22"><path d="M1 12L12 2l13 8-11 10z" fill="#8a9696"/><path d="M1 12l13 8 11-10" stroke="#5a6464" stroke-width="1.2" fill="none"/><path d="M6 9l10 6M9 6l10 6" stroke="#b0bcbc" stroke-width="1"/></svg>
<svg class="a" style="left:698px;top:1047px" width="26" height="26"><defs><radialGradient id="ff" cx="0.6" cy="0.35" r="0.7"><stop offset="0" stop-color="#ffe040"/><stop offset="0.45" stop-color="#ff8a18"/><stop offset="1" stop-color="#e02a40"/></radialGradient></defs><circle cx="13" cy="13" r="11.5" fill="url(#ff)"/><circle cx="12" cy="14" r="5.5" fill="#5a3ab8"/><path d="M6 8c4-3 9-2 11 3-3-1-6 0-7 3z" fill="#ff9a20"/></svg>
<div class="a" style="left:748px;top:1048px;width:24px;height:24px;background:#1010e0;"></div>
<div class="a" style="left:749px;top:1049px;font-size:19px;color:#fff;font-weight:bold;line-height:22px">探</div>
<svg class="a" style="left:796px;top:1048px" width="26" height="25"><path d="M9 4h15v17H9z" fill="#f4f4f4" stroke="#2a5aa8" stroke-width="1"/><path d="M13 8h9M13 11h9M13 14h9M13 17h9" stroke="#2a5aa8" stroke-width="1.2"/><path d="M1 2l12-1.5v24L1 23z" fill="#2a5aa8"/><path d="M3 8l1.5 8 2-6 2 6 1.5-8" stroke="#fff" stroke-width="1.3" fill="none"/></svg>
<div class="a" style="left:847px;top:1049px;width:22px;height:22px;background:#40c0d0;"></div>
<div class="a" style="left:848px;top:1049px;font-size:18px;color:#f0e020;font-weight:bold;line-height:22px;text-shadow:1px 1px 0 #2030c0">秀</div>
<svg class="a" style="left:896px;top:1049px" width="22" height="23"><path d="M2 5l14-4 5 3v15l-14 4-5-3z" fill="#3a8ad8"/><path d="M3 7l14-4M3 10l14-4M3 13l14-4M3 16l14-4M3 19l14-4" stroke="#e8f4ff" stroke-width="1.3"/><path d="M17 3v16l4-3V4" fill="#1a5aa0"/></svg>
<div class="a" style="left:944px;top:1048px;width:24px;height:24px;background:#f4e0c8;"></div>
<div class="a" style="left:948px;top:1049px;font-size:20px;color:#e88a20;font-weight:bold;line-height:22px">F</div>
<div class="a" style="left:994px;top:1048px;width:24px;height:24px;border-radius:50%;background:#2d8cff;border:2px solid #e8f0ff"></div>
<div class="a" style="left:999px;top:1056px;width:10px;height:8px;background:#fff;border-radius:1px"></div><div class="a" style="left:1009px;top:1057px;width:0;height:0;border-right:5px solid #fff;border-top:3px solid transparent;border-bottom:3px solid transparent"></div>
<svg class="a" style="left:1043px;top:1047px" width="24" height="26"><path d="M12 1L1 13l11 12 11-12z" fill="#111"/><path d="M14 3l-6 11h5l-3 9 8-12h-5z" fill="#4aa0f0"/></svg>
<svg class="a" style="left:1092px;top:1048px" width="24" height="26"><path d="M6 3l14-2v6L6 9z" fill="#e0b820"/><path d="M1 9h6v10H1z" fill="#3050b0"/><path d="M11 14h8v5h-8zM7 19h8v5H7z" fill="#c03040"/></svg>
<div class="a" style="left:1141px;top:1052px;width:22px;height:17px;border-radius:50% 50% 40% 50%;background:#cfe0ee;border:1px solid #789"></div>
<div class="a" style="left:1146px;top:1055px;width:4px;height:4px;border-radius:50%;background:#e04040"></div><div class="a" style="left:1152px;top:1054px;width:4px;height:4px;border-radius:50%;background:#40c040"></div>
<svg class="a" style="left:1150px;top:1047px" width="16" height="24"><path d="M14 1L4 22" stroke="#e0a040" stroke-width="2.5"/></svg>
<div class="a" style="left:1178px;top:1040px;width:48px;height:40px;background:#4a4758"></div>
<div class="a" style="left:1190px;top:1049px;width:22px;height:22px;background:#8cc4ec;border:1px solid #4a90d0;border-radius:2px"></div>
<div class="a" style="left:1192px;top:1051px;width:17px;height:17px;background:#f5891e;border-radius:50%"></div>
<div class="a" style="left:1198px;top:1055px;width:0;height:0;border-left:8px solid #fff;border-top:5px solid transparent;border-bottom:5px solid transparent"></div>
<div class="a" style="left:496px;top:1078px;width:40px;height:2px;background:#b8b0f0"></div>
<div class="a" style="left:692px;top:1078px;width:40px;height:2px;background:#b8b0f0"></div>
<div class="a" style="left:937px;top:1078px;width:40px;height:2px;background:#b8b0f0"></div>
<div class="a" style="left:986px;top:1078px;width:40px;height:2px;background:#b8b0f0"></div>
<div class="a" style="left:1035px;top:1078px;width:40px;height:2px;background:#b8b0f0"></div>
<div class="a" style="left:1084px;top:1078px;width:40px;height:2px;background:#b8b0f0"></div>
<div class="a" style="left:1133px;top:1078px;width:40px;height:2px;background:#b8b0f0"></div>
<div class="a" style="left:1178px;top:1078px;width:48px;height:2px;background:#b8b0f0"></div>
<svg class="a" style="left:1605px;top:1046px" width="200" height="30"><g stroke="#fff" fill="none" stroke-width="1.5">
<circle cx="17" cy="7" r="3.2"/><circle cx="10" cy="13" r="3.2"/><path d="M4 22c0-4 2-6 6-6s6 2 6 6M13 15c1-3 2-4 4-4 3 0 5 2 5 6"/>
<path d="M43 17l6-6 6 6"/>
<path d="M68 17h13a3.5 3.5 0 0 0 0-7 4.5 4.5 0 0 0-8-1.5 3.5 3.5 0 0 0-5 3 2.8 2.8 0 0 0 0 5.5z" fill="#fff" stroke="none"/>
<path d="M92 20a11 11 0 0 1 11-11M95 20a8 8 0 0 1 8-8M98 20a5 5 0 0 1 5-5"/><circle cx="102" cy="19" r="1.5" fill="#fff"/>
<path d="M113 12h3l5-4v16l-5-4h-3zM124 11c2 2 2 7 0 9M127 9c3 3 3 10 0 13"/>
</g></svg>
<div class="a" style="left:1743px;top:1047px;font-size:21px;color:#fff;line-height:24px;transform:scaleX(0.8);transform-origin:0 0">A</div>
<div class="a" style="left:1769px;top:1051px;width:17px;height:17px;background:#fff;border-radius:1px"></div>
<svg class="a" style="left:1771px;top:1053px" width="13" height="13"><path d="M8 2v6a3 3 0 0 1-6 1" stroke="#111" stroke-width="2" fill="none"/><circle cx="6.5" cy="6.5" r="5.5" fill="none" stroke="#111" stroke-width="1.2"/></svg>
<div class="a" style="left:1818px;top:1043px;font-size:12px;color:#fff;white-space:nowrap;line-height:15px">16:41</div>
<div class="a" style="left:1803px;top:1061px;font-size:12px;color:#fff;white-space:nowrap;line-height:15px">2019/04/08</div>
<svg class="a" style="left:1878px;top:1050px" width="28" height="26"><path d="M2 2h16v11H8l-3 3v-3H2z" fill="#fff"/><path d="M5 5.5h10M5 8h10M5 10.5h7" stroke="#1f1c35" stroke-width="1"/><circle cx="17" cy="17.5" r="6.5" fill="#2a2838" stroke="#555" stroke-width="1"/></svg>
<div class="a" style="left:1892px;top:1061px;font-size:9px;color:#fff;line-height:12px;font-weight:bold">1</div>
<div class="a" style="left:1915px;top:1040px;width:1px;height:40px;background:#5a5870"></div>
<div class="a" style="left:8px;top:1031px;width:1904px;height:4px;background:linear-gradient(rgba(0,0,0,0.28),rgba(0,0,0,0))"></div><div class="a" style="left:155px;top:1033px;width:1px;height:7px;background:#c8c8c8"></div><div class="a" style="left:311px;top:1033px;width:1px;height:7px;background:#c8c8c8"></div><div class="a" style="left:467px;top:1033px;width:1px;height:7px;background:#c8c8c8"></div><div class="a" style="left:1721px;top:1033px;width:1px;height:7px;background:#c8c8c8"></div></body></html>
